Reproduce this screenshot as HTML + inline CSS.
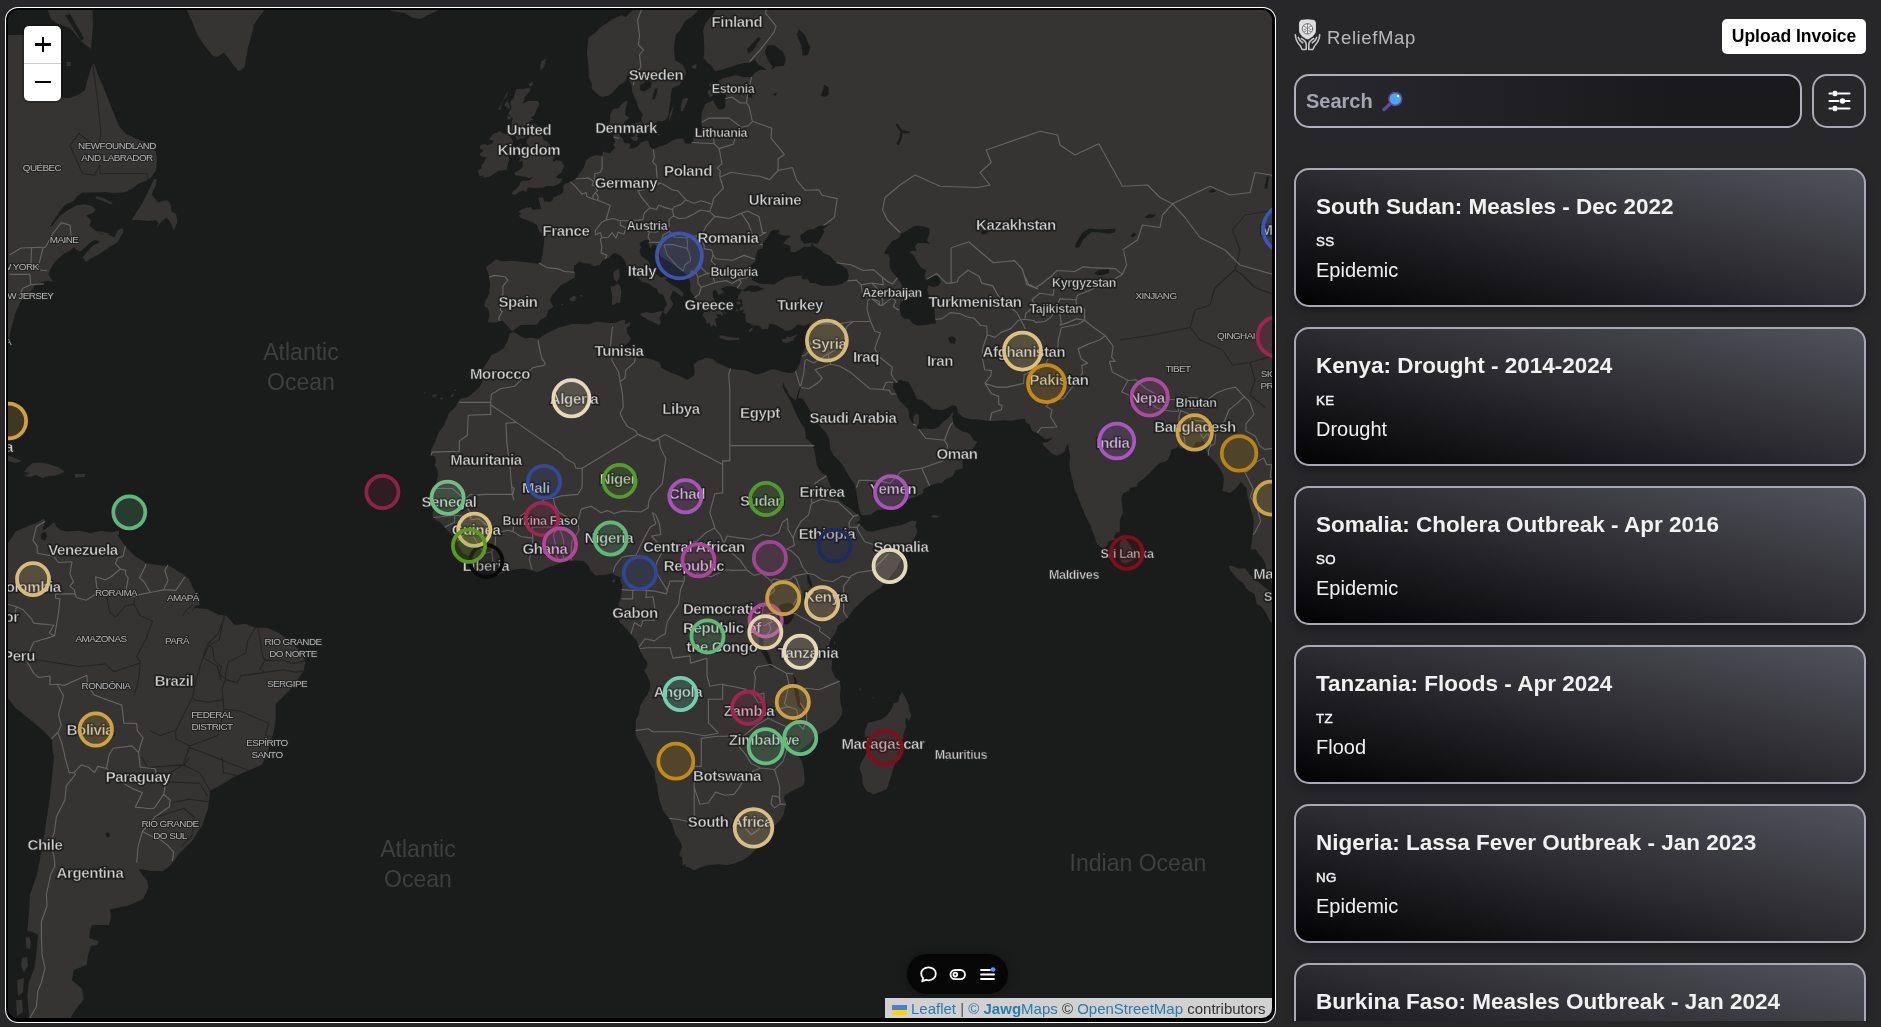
<!DOCTYPE html>
<html><head><meta charset="utf-8"><title>ReliefMap</title>
<style>
*{box-sizing:border-box}
html,body{margin:0;padding:0}
body{width:1881px;height:1027px;overflow:hidden;background:#27272a;font-family:"Liberation Sans",sans-serif;position:relative}
#frame{position:absolute;left:4.8px;top:6.8px;width:1271.4px;height:1016.4px;border-radius:13px;background:#fff}
#frame2{position:absolute;left:1.3px;top:1.3px;right:1.3px;bottom:1.3px;border-radius:12px;background:#000}
#map{position:absolute;left:8px;top:10px;width:1264px;height:1008px;border-radius:10px;overflow:hidden;background:#1a1c1c;will-change:transform}
#map svg.base{position:absolute;left:-8px;top:-10px;width:1881px;height:1027px}
.lbl{font-family:"Liberation Sans",sans-serif;font-weight:bold;fill:#cfcfcf;stroke:#1d1d1d;stroke-width:3px;paint-order:stroke;stroke-linejoin:round;text-anchor:middle}
.lbs{font-family:"Liberation Sans",sans-serif;font-weight:normal;fill:#b4b4b4;stroke:#222;stroke-width:2.2px;paint-order:stroke;stroke-linejoin:round;text-anchor:middle}
.lbt{font-family:"Liberation Sans",sans-serif;font-weight:bold;fill:none;stroke:#2b2b2a;stroke-width:.45px;text-anchor:middle}
.oc{font-family:"Liberation Sans",sans-serif;fill:#3e3f3f;text-anchor:middle}
#zoom{position:absolute;left:16px;top:16px;width:37px;height:75px;background:#fff;border-radius:5px;box-shadow:0 0 0 2px rgba(0,0,0,.2)}
#zoom i{position:absolute;background:#000;display:block}
#attr{position:absolute;left:877px;top:987.5px;width:387px;height:21px;background:rgba(255,255,255,.8);font-size:15px;line-height:21px;color:#333;white-space:nowrap;padding-left:7px}
#attr span.a{color:#2b7bab}
#attr .flag{display:inline-block;width:15px;height:10px;margin-right:4px;background:linear-gradient(#4c7be1 50%,#ffd500 50%);vertical-align:-1px}
#pill{position:absolute;left:899px;top:944px;width:101px;height:40px;border-radius:20px;background:#060606;box-shadow:0 0 10px rgba(0,0,0,.35)}
#side{position:absolute;left:1280px;top:0;width:601px;height:1021px;overflow:hidden;will-change:transform}
.card{position:absolute;left:14px;width:572px;height:139px;border:2px solid #a9a9b4;border-radius:15px;background:linear-gradient(to bottom left,#52525b 0%,#2b2b30 50%,#020203 100%);color:#f1f1f1;box-shadow:0 5px 8px rgba(0,0,0,.25)}
.card b{position:absolute;left:20px;top:21.8px;font-size:22.5px;line-height:30px;white-space:nowrap}
.card u{position:absolute;left:20px;top:63px;font-size:13.3px;line-height:18px;font-weight:normal;-webkit-text-stroke:.45px #f1f1f1;text-decoration:none;letter-spacing:.3px}
.card s{position:absolute;left:20px;top:86.9px;font-size:20px;line-height:26px;text-decoration:none}
#logo{position:absolute;left:47px;top:24.6px;font-size:18.5px;line-height:26px;color:#b9b9b9;letter-spacing:.62px}
#upl{position:absolute;left:442px;top:19px;width:144px;height:35px;border-radius:5px;background:#fff;color:#000;font-weight:bold;font-size:17.5px;line-height:34px;text-align:center}
#search{position:absolute;left:14px;top:74px;width:508px;height:54px;border:2px solid #b1b1bd;border-radius:15px;background:linear-gradient(to right,#29292d,#1a1a1d 75%)}
#search span{position:absolute;left:10px;top:12px;font-size:20px;line-height:26px;font-weight:bold;color:#a4a4b3}
#filt{position:absolute;left:532px;top:74px;width:54px;height:54px;border:2px solid #a9a9b4;border-radius:15px;background:#27272a}
</style></head>
<body>
<div id="frame"><div id="frame2"></div></div>
<div id="map">
<svg class="base" viewBox="0 0 1881 1027">
<rect width="1881" height="1027" fill="#1a1c1c"/>
<path id="landp" d="M510.0 333.0 L514.3 332.2 L524.3 338.3 L531.4 337.4 L537.8 339.1 L547.7 333.0 L558.4 327.8 L573.3 323.8 L588.3 324.2 L597.5 321.5 L607.5 322.9 L615.3 322.9 L622.4 319.8 L625.2 320.6 L625.2 324.2 L630.6 322.0 L629.5 326.0 L626.7 327.8 L627.4 333.0 L630.9 338.3 L628.8 342.6 L623.8 346.1 L623.8 349.5 L629.5 352.1 L631.6 355.5 L639.5 358.4 L645.9 358.0 L653.0 359.7 L659.4 362.2 L661.5 368.1 L670.0 372.3 L678.6 375.6 L687.1 379.7 L694.2 375.6 L694.9 370.6 L693.5 364.8 L698.5 360.6 L706.3 357.8 L712.7 358.9 L717.0 363.1 L722.7 365.2 L731.2 368.9 L745.4 370.6 L756.8 374.8 L764.6 372.3 L772.4 368.9 L781.7 371.4 L783.5 382.6 L782.4 386.3 L784.5 391.2 L788.1 396.8 L792.4 404.9 L795.9 413.6 L800.2 421.5 L804.4 427.8 L805.2 430.9 L805.9 437.9 L812.3 444.0 L815.1 453.2 L816.5 463.8 L818.0 467.6 L821.5 472.8 L826.5 475.8 L830.8 487.0 L832.9 493.7 L835.7 497.4 L843.6 504.0 L850.7 509.1 L855.6 512.8 L859.9 516.4 L859.9 520.8 L854.9 523.3 L858.8 523.3 L861.3 525.8 L867.0 531.3 L872.0 531.6 L882.7 529.1 L893.3 526.6 L901.9 525.1 L911.1 520.8 L916.7 521.3 L915.4 525.8 L917.5 531.3 L914.0 538.9 L909.7 545.3 L906.8 548.9 L900.4 561.1 L896.9 568.3 L889.1 578.2 L880.5 587.5 L874.1 591.8 L868.4 595.3 L860.6 602.4 L854.2 608.8 L847.8 617.4 L842.8 622.4 L837.9 625.2 L837.2 628.8 L834.3 634.8 L830.8 639.5 L827.9 648.0 L831.5 654.5 L832.2 663.1 L831.5 669.5 L835.0 677.5 L839.6 681.1 L840.7 688.3 L840.0 696.3 L840.7 703.6 L842.5 710.2 L841.4 715.4 L835.7 723.5 L827.9 729.4 L815.1 735.4 L810.1 742.5 L800.2 749.7 L798.0 755.0 L801.6 761.1 L803.7 768.0 L804.8 781.1 L803.0 785.8 L791.6 791.3 L785.2 795.2 L783.8 797.6 L786.0 804.7 L783.8 813.5 L780.3 820.0 L774.6 825.7 L772.4 829.0 L768.9 836.4 L761.8 843.1 L754.7 850.6 L750.4 854.8 L743.3 859.9 L734.0 863.4 L728.4 865.1 L718.4 864.2 L709.2 865.1 L700.6 867.2 L694.2 870.5 L688.5 867.2 L685.7 866.8 L685.3 864.2 L683.4 864.2 L683.6 866.4 L682.1 864.2 L682.8 862.5 L682.1 858.2 L679.3 854.8 L680.0 852.3 L682.1 847.2 L680.7 842.2 L675.0 833.9 L672.2 824.1 L669.3 818.4 L663.6 811.9 L660.1 802.3 L658.0 793.6 L657.2 785.8 L654.8 778.0 L655.1 771.8 L650.8 764.9 L645.9 755.8 L641.6 745.2 L635.9 736.2 L635.6 730.9 L635.9 719.8 L638.4 715.4 L640.2 705.8 L644.4 698.5 L648.0 694.1 L650.1 686.9 L650.1 682.5 L646.6 674.6 L644.4 670.3 L646.6 667.4 L647.3 662.4 L643.7 657.3 L639.5 649.5 L638.8 645.9 L636.3 640.2 L630.2 633.8 L627.7 630.2 L620.3 623.1 L617.4 617.4 L613.9 611.0 L618.1 608.1 L618.8 603.2 L620.3 598.9 L621.7 592.5 L622.4 585.4 L620.3 580.4 L621.0 577.5 L615.3 575.4 L612.4 573.3 L605.3 574.7 L601.8 574.7 L595.4 575.4 L591.1 571.1 L587.6 564.7 L583.3 561.1 L576.2 560.4 L569.1 560.8 L560.5 562.5 L557.0 564.7 L550.6 566.5 L544.9 569.0 L537.1 572.2 L530.0 569.7 L523.6 568.6 L516.4 569.3 L508.6 570.8 L502.2 573.3 L497.2 574.9 L493.0 573.3 L488.0 570.4 L481.6 566.1 L475.2 561.1 L470.2 556.8 L463.1 553.2 L459.6 547.5 L457.8 545.3 L458.1 541.7 L454.6 538.1 L451.7 534.5 L447.5 530.2 L444.6 527.3 L441.1 522.9 L436.1 520.0 L432.9 517.1 L432.5 512.8 L434.0 509.5 L431.8 504.7 L427.6 500.2 L430.4 498.1 L434.7 490.7 L436.1 483.3 L438.2 475.1 L436.8 468.3 L434.7 465.3 L436.1 460.8 L434.7 456.2 L430.8 454.7 L431.1 450.2 L435.4 441.0 L438.2 433.2 L443.9 425.4 L446.8 418.4 L448.9 412.8 L455.3 407.3 L458.1 401.7 L460.3 398.9 L466.7 397.6 L471.6 394.4 L479.5 387.1 L483.7 378.9 L481.6 376.4 L482.3 369.8 L486.6 363.1 L491.6 355.0 L498.0 352.1 L503.6 348.2 L507.2 341.7 L509.0 336.5Z M902.2 692.0 L905.4 697.8 L907.9 702.9 L909.3 709.5 L911.1 716.1 L909.0 720.9 L906.5 717.2 L905.1 721.3 L906.1 727.2 L903.3 733.9 L903.3 737.7 L899.7 748.2 L896.2 760.3 L892.6 771.0 L889.8 780.3 L886.9 788.9 L882.0 791.3 L873.4 794.4 L867.0 791.3 L862.8 785.0 L862.4 776.8 L859.6 768.7 L860.6 763.4 L864.2 757.3 L867.7 751.2 L868.1 743.7 L865.2 736.5 L864.5 731.7 L868.1 722.8 L874.1 721.3 L881.2 719.4 L886.9 715.4 L890.5 711.0 L892.6 706.6 L893.3 702.9 L898.3 702.2 L899.4 696.3Z M1122.3 535.8 L1120.5 537.4 L1121.6 540.3 L1120.2 542.1 L1119.5 548.9 L1119.8 556.8 L1121.2 561.8 L1124.8 563.8 L1128.7 562.5 L1133.0 559.7 L1134.3 556.1 L1133.3 551.1 L1130.1 545.3 L1127.3 541.0 L1124.4 537.4Z M931.0 516.0 L933.9 514.9 L938.1 515.7 L939.6 516.4 L936.0 517.9 L932.4 517.5Z M783.5 382.6 L784.5 386.3 L787.4 390.4 L788.4 394.0 L790.9 396.8 L795.6 400.6 L797.0 396.8 L798.4 391.2 L800.5 385.9 L800.5 387.9 L799.1 393.6 L798.0 398.1 L802.3 398.5 L805.9 403.7 L811.2 412.4 L816.9 421.9 L822.6 429.3 L826.5 433.2 L829.3 439.4 L830.4 449.4 L833.6 455.5 L838.2 459.7 L844.3 467.6 L848.5 475.8 L854.6 484.0 L856.4 492.2 L857.4 499.6 L859.6 510.6 L861.3 515.3 L865.6 515.3 L872.0 514.2 L877.0 510.2 L884.8 509.5 L894.8 505.4 L901.2 501.4 L909.0 498.8 L916.1 496.6 L923.2 493.3 L923.6 488.9 L929.6 485.9 L936.7 483.3 L941.7 483.3 L945.2 479.6 L952.7 476.2 L955.2 470.6 L963.0 468.3 L962.3 463.1 L963.4 457.8 L968.0 457.0 L971.2 450.9 L975.1 445.6 L977.2 441.7 L973.7 440.2 L970.8 435.5 L968.0 432.8 L963.0 431.7 L955.6 427.0 L953.1 422.3 L952.4 416.8 L953.4 411.6 L950.9 414.4 L949.9 416.4 L945.2 420.3 L941.0 423.9 L938.8 427.0 L933.2 429.3 L926.0 428.6 L918.9 429.3 L916.8 427.4 L918.6 424.3 L918.9 419.9 L918.9 415.2 L916.4 413.2 L914.0 416.0 L913.2 419.9 L913.6 424.3 L911.5 421.5 L909.0 417.6 L909.0 412.0 L907.2 408.1 L905.1 406.5 L901.9 402.5 L899.0 400.1 L896.9 395.2 L894.0 389.5 L892.6 387.1 L894.0 383.0 L896.9 382.6 L899.7 379.7 L904.0 381.0 L908.6 381.8 L911.8 387.9 L913.6 391.2 L916.8 398.9 L922.1 400.1 L926.0 403.3 L932.4 408.9 L938.8 409.7 L942.4 410.1 L947.4 408.1 L952.4 405.3 L956.6 406.5 L958.0 412.8 L963.0 417.2 L970.8 419.2 L975.8 419.2 L982.9 419.9 L990.0 421.1 L995.0 421.1 L1003.6 420.3 L1011.4 420.7 L1018.5 419.5 L1024.9 418.4 L1026.3 423.1 L1029.9 424.6 L1032.0 430.9 L1037.0 432.8 L1040.5 435.5 L1045.2 439.3 L1051.2 438.3 L1052.6 438.3 L1048.4 442.1 L1043.0 442.5 L1042.3 444.0 L1046.9 448.6 L1052.3 454.0 L1056.9 455.5 L1061.9 453.6 L1065.1 450.9 L1065.8 447.1 L1067.9 443.3 L1068.6 447.9 L1069.3 452.4 L1070.4 457.8 L1069.3 463.8 L1070.0 469.1 L1071.5 475.8 L1073.2 483.3 L1075.0 490.7 L1077.2 495.1 L1078.9 499.6 L1081.8 506.9 L1084.3 513.5 L1087.5 520.0 L1090.7 525.5 L1092.4 530.9 L1094.2 534.9 L1095.6 540.3 L1096.7 542.5 L1099.2 546.1 L1103.5 548.4 L1107.7 544.6 L1108.1 541.7 L1113.1 539.9 L1115.9 539.6 L1113.4 537.4 L1116.3 532.4 L1119.8 532.0 L1119.8 525.8 L1119.8 520.4 L1123.0 512.0 L1122.0 505.4 L1121.2 498.1 L1123.4 492.9 L1129.1 490.7 L1130.1 488.1 L1137.2 486.3 L1137.2 483.3 L1144.4 478.1 L1150.0 472.8 L1155.7 466.5 L1160.0 463.1 L1166.4 461.2 L1168.9 458.1 L1170.7 453.2 L1171.4 449.4 L1176.4 448.2 L1178.5 445.6 L1179.9 448.6 L1184.9 448.2 L1189.2 447.5 L1193.4 446.7 L1196.3 442.5 L1200.5 441.7 L1202.7 440.2 L1205.2 443.3 L1206.2 450.2 L1208.4 454.7 L1211.2 458.5 L1213.0 460.0 L1217.6 465.3 L1220.4 469.8 L1223.3 475.1 L1224.0 481.1 L1222.2 490.7 L1225.4 491.8 L1229.7 492.9 L1234.0 490.0 L1236.8 487.0 L1241.1 481.8 L1243.9 485.5 L1246.4 487.8 L1247.5 495.9 L1249.6 505.4 L1252.4 514.2 L1253.9 522.2 L1253.2 530.2 L1252.8 534.5 L1251.7 541.7 L1250.7 547.5 L1251.7 550.0 L1255.3 548.9 L1258.8 553.9 L1263.1 559.0 L1265.6 564.7 L1266.0 570.4 L1268.1 576.8 L1272.4 584.7 L1275.2 588.2 L1284.4 591.8 L1284.4 -24.9 L634.5 -24.9 L633.8 10.4 L629.5 12.8 L626.0 17.6 L621.7 15.2 L613.9 18.4 L606.8 23.1 L601.8 26.2 L595.4 32.4 L588.3 37.8 L587.6 46.1 L586.8 53.5 L588.3 63.7 L589.0 77.9 L591.8 84.1 L591.8 88.9 L594.7 91.6 L599.3 95.7 L602.1 97.0 L608.9 95.4 L614.2 91.0 L618.8 85.5 L622.4 83.4 L626.3 80.0 L627.4 73.7 L628.4 80.0 L631.3 84.1 L632.4 92.3 L636.3 101.1 L638.8 109.0 L643.0 114.8 L640.9 119.3 L642.3 122.5 L644.1 128.2 L643.4 130.7 L645.9 131.2 L650.1 130.5 L654.0 128.9 L653.3 124.4 L657.6 121.3 L662.9 121.3 L666.5 119.3 L668.6 114.2 L669.3 107.0 L670.8 99.7 L670.8 94.4 L672.2 88.2 L679.6 84.8 L684.3 78.6 L686.4 72.3 L682.8 65.1 L675.0 60.1 L674.0 50.6 L674.3 43.8 L675.7 34.7 L679.6 30.9 L685.3 20.7 L691.4 16.8 L697.1 12.0 L701.3 3.8 L701.3 -24.9 L719.8 -24.9 L718.4 3.8 L714.8 12.0 L705.6 23.1 L702.8 30.9 L703.8 36.3 L704.2 46.1 L704.2 53.5 L703.5 57.9 L707.7 63.0 L710.6 65.1 L715.2 71.6 L722.7 69.4 L729.4 67.3 L736.2 65.1 L743.3 63.0 L749.0 63.0 L754.7 59.4 L757.5 63.7 L763.2 67.3 L766.8 70.1 L759.6 70.1 L754.7 73.0 L751.1 77.2 L744.0 77.2 L735.5 75.1 L728.0 77.2 L722.7 78.2 L718.8 80.7 L719.1 86.9 L720.9 92.3 L726.2 92.3 L725.5 99.1 L725.2 107.0 L722.7 109.6 L718.4 109.6 L713.1 100.4 L705.6 103.7 L701.7 112.9 L701.3 120.6 L702.0 127.0 L701.3 132.0 L697.8 136.3 L693.5 136.3 L693.5 140.0 L690.7 143.7 L685.0 143.4 L683.2 138.4 L676.8 138.8 L671.8 140.7 L667.2 144.3 L658.7 146.8 L653.3 149.2 L649.8 146.8 L648.7 141.3 L645.9 140.7 L640.9 142.5 L638.0 146.2 L633.4 148.6 L629.2 148.6 L630.6 143.7 L624.5 143.1 L622.4 138.2 L619.6 135.7 L619.9 129.5 L623.1 125.1 L624.9 121.3 L629.5 118.1 L625.2 114.8 L625.2 110.3 L627.0 104.4 L627.4 100.4 L622.8 102.4 L618.8 108.3 L613.2 109.0 L610.3 114.2 L609.6 123.2 L609.6 128.9 L613.2 130.7 L613.5 137.0 L615.3 142.5 L613.2 144.3 L615.6 148.0 L613.2 149.5 L610.0 153.4 L603.2 151.6 L602.1 155.8 L596.1 154.9 L590.4 157.0 L585.8 160.5 L584.0 167.0 L581.2 171.6 L578.3 175.1 L576.9 178.5 L572.6 180.2 L569.1 182.5 L565.2 183.6 L563.4 185.8 L563.4 192.0 L559.8 194.8 L553.4 197.5 L552.7 200.3 L549.9 201.9 L544.2 201.4 L543.1 197.5 L538.1 197.5 L540.6 206.8 L541.3 208.9 L537.8 208.9 L532.8 210.0 L530.7 206.8 L523.6 208.4 L518.2 211.6 L521.4 213.8 L518.6 215.4 L521.1 218.0 L530.0 221.2 L534.2 223.3 L537.1 225.4 L539.2 231.6 L543.8 235.2 L544.2 241.3 L543.1 250.4 L541.0 261.8 L537.8 263.7 L530.7 262.8 L525.0 262.3 L511.5 260.8 L502.2 261.3 L495.8 259.3 L492.3 262.8 L485.9 267.2 L488.7 274.4 L490.1 284.4 L489.1 293.8 L485.2 301.2 L484.4 306.4 L487.3 308.0 L488.7 309.4 L489.4 313.9 L488.0 322.3 L495.8 322.4 L502.6 320.6 L507.2 326.0 L512.2 331.3 L514.0 330.0 L520.7 325.1 L530.7 324.7 L536.4 324.9 L540.6 319.8 L546.3 317.1 L548.4 310.3 L553.4 306.7 L549.9 300.2 L552.0 295.6 L558.0 288.6 L560.9 284.9 L567.6 282.0 L574.8 277.3 L575.5 273.4 L573.7 270.5 L574.0 265.7 L579.7 261.8 L584.7 263.3 L590.0 263.7 L594.3 266.2 L599.6 264.7 L603.6 259.8 L608.9 257.9 L612.4 253.9 L615.3 252.9 L621.7 256.4 L625.2 261.3 L626.7 267.2 L630.9 272.5 L635.9 275.4 L641.6 281.6 L648.7 283.5 L653.3 287.2 L656.9 289.1 L658.7 293.3 L662.9 294.7 L665.8 301.2 L667.2 304.8 L664.7 307.6 L663.3 312.6 L666.1 314.2 L669.7 309.8 L673.6 304.4 L670.0 297.9 L672.2 291.4 L674.3 291.0 L680.0 295.2 L682.5 297.0 L683.6 293.8 L679.6 289.1 L672.2 284.9 L665.4 280.1 L667.2 277.3 L660.8 277.3 L656.5 274.4 L653.0 272.0 L650.5 265.7 L648.0 260.8 L641.6 256.4 L639.5 250.9 L640.9 247.4 L639.5 242.9 L645.2 239.8 L649.8 240.3 L648.4 243.9 L650.5 248.4 L653.7 243.9 L658.0 246.9 L660.1 255.9 L669.0 261.8 L676.4 266.7 L680.7 270.1 L687.8 275.4 L690.3 283.0 L690.0 291.0 L694.2 296.6 L695.6 299.8 L699.6 304.8 L702.0 310.3 L706.3 310.8 L714.8 313.5 L709.9 311.7 L704.2 312.1 L702.4 315.3 L706.0 319.8 L706.3 324.0 L709.2 322.4 L711.3 327.3 L713.4 324.7 L717.0 327.3 L714.8 318.9 L718.4 318.0 L715.6 314.4 L720.5 314.2 L723.0 316.6 L722.7 311.7 L717.0 307.1 L714.1 305.7 L715.6 301.6 L712.7 296.1 L712.7 291.4 L715.2 289.6 L718.0 293.3 L718.4 295.6 L721.2 293.3 L722.7 295.6 L722.0 291.9 L725.2 293.8 L720.9 288.6 L725.5 286.8 L730.5 286.3 L736.2 287.2 L737.2 288.6 L742.6 289.6 L738.3 294.7 L741.5 291.9 L739.7 294.2 L738.0 295.6 L737.6 299.8 L742.6 299.8 L741.9 301.6 L742.9 306.2 L739.7 307.6 L739.0 311.2 L744.7 309.4 L742.6 312.6 L745.8 314.8 L745.4 319.3 L746.8 322.4 L753.2 324.2 L749.0 325.1 L753.2 325.5 L758.9 325.5 L762.5 329.5 L768.2 329.1 L769.6 323.8 L775.3 324.7 L779.6 326.9 L785.2 331.1 L791.6 330.0 L798.0 324.2 L804.4 326.0 L809.4 323.3 L809.1 327.8 L806.6 331.3 L806.2 335.7 L807.3 340.9 L806.6 344.8 L804.4 349.5 L801.6 356.3 L800.9 358.9 L799.1 365.2 L795.9 370.6 L792.4 373.1 L787.4 372.7 L781.7 371.4Z M511.5 193.7 L515.0 194.7 L522.5 190.3 L526.0 191.8 L527.8 187.5 L534.6 188.1 L542.8 187.8 L546.3 186.1 L553.8 186.1 L558.9 184.0 L561.6 181.6 L562.3 178.7 L558.4 178.5 L555.6 177.3 L558.8 174.5 L561.2 172.8 L564.4 166.0 L561.2 160.8 L555.6 160.3 L553.4 162.3 L552.7 159.9 L554.5 157.6 L552.7 152.8 L549.9 151.6 L551.4 146.5 L547.7 141.9 L543.8 140.0 L542.0 135.7 L540.6 128.2 L537.8 126.1 L534.2 123.2 L528.5 123.4 L527.8 122.5 L533.5 119.6 L530.7 117.4 L534.2 115.5 L537.4 108.3 L539.3 103.7 L537.8 101.1 L528.5 100.8 L522.1 103.7 L525.0 98.8 L523.6 98.4 L526.0 95.4 L530.0 91.0 L530.5 88.4 L527.8 88.0 L521.4 89.6 L516.4 88.7 L514.3 95.0 L513.6 98.4 L510.8 101.1 L510.4 105.0 L511.5 106.6 L510.4 110.3 L507.9 113.8 L512.9 118.1 L511.8 121.9 L510.9 132.0 L512.9 130.7 L514.3 125.1 L517.2 123.8 L518.9 130.1 L517.2 133.2 L515.4 137.0 L517.5 140.3 L520.7 138.2 L523.2 138.4 L526.8 136.1 L530.0 136.3 L526.8 140.0 L526.2 141.9 L528.9 146.8 L531.7 146.8 L530.3 150.4 L530.3 154.6 L530.0 156.4 L525.0 156.0 L519.6 154.9 L518.9 157.0 L521.1 158.7 L518.2 162.3 L522.8 161.1 L522.8 167.0 L518.6 170.5 L514.3 173.0 L515.4 175.6 L518.6 175.6 L521.8 176.8 L523.9 176.2 L529.6 178.3 L533.2 176.2 L530.7 179.6 L527.1 180.8 L522.5 180.8 L519.8 183.0 L519.6 185.3 L516.8 188.1 L512.9 191.8Z M499.4 131.0 L502.6 133.2 L504.4 133.9 L508.3 133.0 L510.8 137.6 L512.5 140.0 L513.2 143.1 L510.0 145.5 L508.6 148.0 L506.8 148.0 L507.6 151.3 L508.6 155.8 L509.3 160.3 L508.3 162.3 L506.8 169.6 L502.7 170.2 L498.3 170.8 L496.2 172.4 L493.3 173.9 L491.6 175.6 L488.7 176.8 L482.3 177.9 L484.4 175.3 L479.8 176.2 L478.4 172.8 L477.7 170.5 L481.6 168.4 L481.6 166.7 L481.4 165.1 L483.4 163.7 L484.9 160.3 L486.1 158.1 L488.0 157.6 L483.7 157.0 L479.5 155.2 L480.2 153.4 L481.6 152.5 L483.7 150.4 L479.8 148.3 L480.5 144.9 L485.5 144.0 L486.6 145.3 L491.2 144.3 L493.0 142.1 L494.0 140.3 L489.8 140.3 L489.4 138.8 L491.9 136.3 L493.1 133.9 L495.3 133.0 L497.7 132.4Z M640.5 313.5 L646.9 311.9 L651.6 313.2 L660.4 311.2 L663.1 311.0 L659.4 318.0 L660.8 322.0 L659.4 325.3 L653.3 322.0 L648.4 319.9 L645.2 318.0 L640.5 315.3Z M617.4 283.5 L620.3 286.3 L621.3 291.4 L621.0 296.1 L619.9 303.3 L616.7 302.5 L613.5 305.5 L611.7 304.4 L612.4 296.1 L611.0 290.0 L610.3 286.3 L613.9 286.6Z M618.8 266.7 L619.2 269.6 L619.9 275.4 L618.1 280.1 L617.1 282.2 L614.6 279.7 L613.5 277.3 L613.2 272.5 L615.6 270.1 L618.1 269.6Z M719.5 335.2 L722.7 335.2 L726.2 336.5 L730.8 337.0 L735.1 337.8 L739.0 337.6 L739.0 340.0 L735.1 340.0 L728.0 340.6 L719.8 338.0Z M781.7 339.6 L786.3 338.4 L786.3 336.5 L790.2 337.0 L793.8 335.7 L798.0 333.9 L793.4 339.1 L794.3 340.4 L791.3 341.1 L786.7 343.0 L782.4 342.2Z M568.7 298.9 L574.0 295.6 L576.5 297.5 L574.8 301.2 L571.6 301.2 L569.8 299.8Z M579.0 294.7 L582.6 295.6 L582.2 296.7 L579.4 295.8Z M560.9 304.8 L563.0 303.5 L563.4 304.8 L561.6 305.7Z M630.9 127.2 L635.2 123.8 L639.5 121.6 L641.6 122.8 L641.6 127.2 L638.8 130.1 L640.5 132.0 L637.3 135.7 L635.2 135.7 L632.0 133.2 L631.1 131.6Z M621.7 129.5 L623.8 128.5 L628.1 128.2 L628.8 132.0 L627.4 135.1 L624.9 134.5 L622.4 132.4Z M630.2 137.6 L636.6 136.1 L638.4 138.2 L636.6 141.0 L633.1 140.4Z M680.7 107.0 L682.8 99.1 L687.1 97.7 L688.5 98.4 L685.7 105.0 L682.8 110.9 L681.1 111.3Z M668.6 120.6 L669.7 114.2 L673.6 105.7 L672.5 112.2 L669.3 120.6Z M707.4 93.0 L708.4 90.3 L714.8 88.5 L717.7 90.6 L714.8 93.7 L709.9 97.7 L709.2 94.4Z M708.8 84.4 L712.7 82.3 L715.9 84.8 L713.4 87.6 L710.6 86.5Z M656.5 134.5 L656.9 132.0 L659.7 133.9 L659.4 135.7Z M691.4 66.6 L696.4 63.7 L696.4 68.7 L693.5 68.7Z M714.5 305.7 L718.0 304.4 L719.8 306.7 L723.7 307.6 L724.4 311.7 L726.9 313.5 L725.2 313.9 L722.7 310.3 L719.8 309.4 L717.0 307.1Z M749.0 330.0 L752.9 327.3 L751.8 330.8 L749.7 332.2Z M735.8 302.5 L739.4 300.9 L741.2 303.9 L738.0 304.6Z M736.2 308.5 L738.0 308.9 L737.6 311.7 L736.2 311.2Z M540.6 70.8 L544.2 66.6 L546.3 57.9 L541.3 61.5 L540.3 65.9Z M528.5 84.1 L532.8 82.1 L532.8 85.5 L529.2 86.2Z M498.0 109.0 L502.2 102.4 L507.9 90.3 L507.2 95.7 L502.9 101.1 L500.1 110.3Z M504.4 105.0 L507.2 101.1 L510.0 106.3 L509.3 109.6Z M507.2 115.7 L511.5 116.8 L510.8 119.3 L506.8 119.3Z M518.2 146.8 L520.7 143.1 L521.1 145.5Z M1229.0 566.1 L1231.8 565.8 L1238.2 568.6 L1245.3 568.6 L1248.9 573.3 L1253.9 579.0 L1261.7 584.7 L1266.0 588.2 L1270.2 591.1 L1275.9 593.2 L1284.4 598.9 L1284.4 630.9 L1274.5 625.9 L1270.2 621.6 L1266.0 613.1 L1261.7 606.7 L1256.7 603.9 L1254.6 593.9 L1248.9 590.4 L1246.0 588.2 L1243.2 583.2 L1237.5 579.0 L1234.0 574.7 L1230.4 570.4Z M830.8 647.0 L832.2 648.0 L833.2 651.6 L831.5 650.9Z M834.3 640.9 L835.4 642.3 L834.7 644.8 L834.0 643.0Z M613.2 579.3 L615.6 580.0 L613.9 582.9 L612.1 581.8Z M944.9 758.0 L948.1 758.4 L948.8 760.7 L946.0 761.5Z M960.2 751.2 L962.7 752.0 L962.3 754.6 L959.8 754.6Z M431.8 395.6 L436.8 394.0 L435.0 398.1Z M439.6 398.1 L442.5 397.6 L441.8 400.5Z M450.3 397.6 L453.2 392.8 L453.5 396.0Z M453.9 390.4 L456.4 388.7 L456.0 391.2Z M424.0 392.4 L425.8 392.0 L425.1 394.4Z M859.6 687.6 L861.0 689.1 L860.6 691.2 L859.6 690.5Z M872.4 697.1 L873.8 697.8 L873.1 699.1Z M0.0 35.0 L40.0 35.0 L55.0 50.0 L57.0 70.0 L58.0 90.0 L62.0 98.0 L70.0 98.0 L78.0 95.0 L85.0 90.0 L88.0 78.0 L91.0 68.0 L94.0 63.0 L98.0 75.0 L105.0 91.0 L112.0 109.0 L119.0 126.0 L126.0 134.0 L137.0 139.0 L148.0 143.0 L156.0 152.0 L157.0 160.0 L156.2 169.7 L151.6 176.7 L146.9 180.2 L138.7 183.7 L130.5 189.5 L123.5 192.5 L114.2 193.1 L104.8 191.9 L95.5 192.5 L82.6 192.5 L76.8 196.6 L73.2 201.2 L65.1 204.7 L60.4 210.6 L55.7 217.6 L49.9 226.9 L52.2 225.8 L59.2 216.4 L67.4 210.6 L76.8 205.3 L84.9 204.2 L91.9 205.9 L95.5 209.4 L93.1 212.9 L86.1 215.3 L90.8 219.9 L89.6 225.8 L95.5 230.5 L100.1 234.0 L109.5 235.1 L114.2 237.5 L117.7 230.5 L122.3 228.1 L123.5 231.6 L118.8 239.8 L116.5 243.3 L111.8 245.6 L104.8 250.3 L97.8 255.0 L90.8 258.5 L86.1 262.0 L82.6 257.3 L87.3 251.5 L93.1 245.6 L100.1 242.1 L95.5 239.8 L90.8 242.1 L86.1 246.8 L80.3 251.5 L75.6 249.2 L74.4 246.8 L68.6 251.5 L63.9 253.8 L58.1 258.5 L53.4 264.3 L49.9 270.2 L48.7 274.9 L49.9 277.2 L53.4 281.9 L47.5 280.7 L41.7 281.9 L40.0 283.0 L35.0 284.8 L32.5 289.5 L26.0 296.0 L20.0 302.0 L15.0 314.5 L13.0 322.0 L11.0 329.5 L8.8 339.5 L6.0 350.0 L0.0 352.0Z M153.9 179.0 L148.0 191.9 L142.2 203.6 L135.2 214.1 L131.7 219.9 L139.9 219.9 L148.0 221.1 L156.2 219.9 L158.6 223.4 L156.2 228.1 L162.1 221.1 L166.7 217.6 L170.3 222.3 L173.8 230.5 L177.3 222.3 L176.1 214.1 L171.4 211.8 L170.3 203.6 L166.7 200.1 L158.6 202.4 L153.9 197.7 L151.6 194.2 L155.6 186.0 L156.8 179.0Z M95.5 196.3 L102.5 197.7 L113.0 203.0 L110.6 204.2 L101.3 200.6 L96.0 198.3Z M96.0 230.7 L100.1 233.4 L107.1 234.8 L110.6 234.0 L104.8 232.6 L100.1 231.4Z M44.0 0.0 L92.0 0.0 L93.0 26.0 L91.0 49.0 L82.0 42.0 L70.0 28.0 L58.0 24.0 L51.0 19.0Z M67.0 62.0 L71.0 62.0 L71.0 66.0 L67.0 66.0Z M186.0 0.0 L187.0 11.0 L192.0 20.7 L196.7 33.5 L204.7 46.0 L212.6 55.8 L218.0 57.0 L223.8 52.6 L230.0 60.6 L238.0 71.0 L241.0 70.0 L244.5 67.0 L247.7 49.4 L251.0 36.7 L254.0 24.0 L263.7 11.0 L264.0 0.0Z M390.0 0.0 L391.0 11.0 L404.0 12.8 L412.0 17.5 L420.0 19.0 L428.0 15.0 L437.5 10.8 L438.0 0.0Z M24.0 472.0 L27.0 468.0 L32.5 463.0 L41.0 462.5 L50.0 464.5 L58.0 467.0 L65.0 472.0 L60.0 474.0 L55.0 475.8 L48.0 476.0 L42.5 478.0 L36.0 475.0 L30.0 477.0 L24.0 476.0 L30.0 473.0Z M75.0 474.0 L85.0 474.0 L85.0 477.0 L75.0 477.5Z M0.0 455.0 L10.0 456.0 L22.0 461.0 L16.0 463.0 L8.0 461.0 L0.0 462.0Z M115.0 531.0 L119.0 531.0 L119.0 535.0 L115.0 535.5Z M0.0 545.0 L8.8 542.0 L15.8 531.5 L28.0 526.0 L38.6 522.0 L43.8 518.4 L45.5 521.0 L43.0 527.0 L43.0 530.7 L47.0 528.0 L50.0 526.0 L54.0 522.0 L56.0 526.0 L60.0 530.0 L66.6 531.5 L79.0 530.7 L91.0 533.0 L101.7 530.7 L112.0 532.4 L117.5 530.7 L116.0 534.0 L121.0 540.0 L126.0 547.0 L135.0 556.0 L145.5 563.0 L157.8 565.0 L170.0 566.6 L182.0 573.6 L189.0 579.0 L193.0 587.7 L198.0 598.0 L200.0 605.0 L195.0 606.0 L191.0 612.0 L184.5 616.0 L190.0 613.0 L195.0 608.0 L207.0 609.0 L218.0 614.5 L226.6 616.0 L235.0 625.0 L246.0 624.0 L255.5 627.7 L267.0 627.7 L279.0 633.0 L289.7 641.0 L300.0 651.0 L305.5 662.0 L303.8 670.6 L296.7 681.0 L289.7 690.0 L281.0 698.7 L275.7 704.0 L275.7 719.7 L274.0 730.0 L270.0 745.0 L263.4 761.8 L261.6 765.0 L250.0 770.0 L236.6 775.4 L226.0 782.0 L210.0 791.0 L209.0 800.0 L207.7 809.6 L202.4 825.0 L192.0 841.0 L178.8 854.0 L171.0 864.8 L163.0 871.0 L150.0 871.0 L139.0 868.7 L137.0 862.0 L140.0 872.0 L147.0 880.5 L148.5 888.0 L143.0 899.0 L128.8 905.5 L110.0 909.5 L111.0 917.0 L109.0 925.0 L92.0 925.0 L90.0 931.0 L89.0 938.0 L98.6 941.0 L97.0 945.0 L90.7 946.0 L88.0 955.0 L86.7 964.7 L73.6 970.0 L72.0 980.5 L81.5 988.0 L84.0 999.0 L76.0 1009.0 L71.0 1017.0 L71.0 1027.0 L29.0 1027.0 L29.0 1014.8 L27.3 996.6 L29.0 982.0 L34.6 967.5 L36.4 953.0 L38.0 934.7 L33.0 932.0 L27.3 931.0 L29.0 912.8 L30.0 894.6 L36.4 876.4 L39.4 862.0 L45.0 830.0 L50.0 796.0 L54.0 757.0 L52.5 750.0 L52.0 740.0 L42.5 730.0 L27.5 717.5 L15.0 707.5 L7.5 697.5 L0.0 693.0Z M25.5 938.0 L29.0 936.5 L31.0 942.0 L30.0 949.0 L26.5 948.0Z M22.0 958.0 L27.0 957.0 L28.0 966.0 L24.0 972.0 L21.0 966.0Z M17.0 980.0 L24.0 978.0 L23.0 992.0 L18.0 996.0Z M16.0 1000.0 L22.0 1000.0 L23.0 1012.0 L17.0 1016.0Z " fill="#353433"/>
<clipPath id="lc"><use href="#landp"/></clipPath>
<path d="M758.9 283.5 L762.5 283.9 L767.5 283.9 L774.6 284.4 L778.1 281.6 L785.2 277.7 L792.4 276.3 L802.0 275.4 L801.6 279.2 L808.0 279.2 L810.1 283.0 L814.4 283.0 L821.5 285.8 L827.9 285.8 L834.3 285.8 L841.4 283.9 L847.8 280.1 L848.9 274.9 L846.8 269.1 L843.6 266.7 L837.9 263.3 L834.3 260.8 L830.0 255.9 L823.6 252.9 L820.8 249.9 L817.2 247.9 L813.7 245.9 L812.3 243.4 L818.0 243.4 L821.5 236.8 L824.4 231.6 L822.9 229.5 L827.2 225.9 L831.5 223.8 L826.5 224.9 L818.7 225.9 L813.7 229.0 L807.3 230.1 L803.0 233.7 L800.2 234.7 L800.9 239.8 L804.4 243.9 L811.6 242.4 L811.2 246.4 L803.7 246.9 L800.9 248.9 L794.8 252.4 L790.2 251.4 L790.6 246.9 L788.1 244.9 L783.1 243.4 L786.7 239.3 L791.6 235.7 L786.7 235.7 L781.7 235.2 L778.1 233.7 L779.6 230.6 L773.9 230.1 L770.7 231.6 L766.8 238.3 L763.2 242.9 L762.8 248.4 L757.5 249.9 L755.7 255.4 L755.4 261.8 L751.1 264.7 L750.4 269.6 L747.9 271.5 L751.1 276.3 L752.5 280.6Z M741.9 291.0 L746.1 291.4 L749.7 290.5 L751.1 291.9 L757.5 291.6 L758.9 291.0 L764.6 288.4 L760.4 287.7 L758.2 285.8 L755.4 285.8 L751.8 285.2 L747.9 286.1 L745.4 288.6Z M889.8 266.7 L891.2 270.5 L895.5 275.8 L899.7 281.1 L901.9 285.3 L904.7 289.6 L910.4 291.4 L906.8 292.4 L903.6 295.2 L902.9 300.7 L900.4 302.5 L899.7 306.7 L899.7 309.8 L901.2 316.2 L904.0 318.4 L909.0 319.3 L912.5 323.3 L917.5 325.5 L926.4 325.1 L932.4 323.8 L936.0 323.3 L935.6 319.3 L934.9 318.0 L934.6 308.9 L934.6 304.4 L929.6 301.2 L932.4 298.9 L933.2 295.6 L928.9 295.2 L927.1 290.5 L928.2 285.3 L933.2 287.2 L938.1 285.8 L941.0 282.0 L938.1 276.3 L933.2 274.9 L928.9 278.7 L925.7 280.6 L924.6 275.4 L926.4 270.5 L921.8 268.1 L918.9 264.7 L916.1 260.3 L913.6 254.9 L909.3 251.9 L913.6 250.4 L916.8 251.4 L914.7 246.9 L917.5 242.9 L924.6 242.9 L929.6 243.9 L927.1 240.8 L929.6 232.6 L928.9 228.0 L923.2 226.4 L916.8 225.4 L911.8 227.5 L905.4 231.6 L901.9 233.2 L898.3 238.8 L892.6 240.8 L888.4 245.9 L884.8 250.9 L884.1 253.4 L888.4 254.4 L889.8 258.8 L889.4 262.8Z M980.8 232.6 L984.4 228.5 L988.6 229.5 L987.2 233.2 L982.9 234.7Z M1074.7 245.9 L1077.5 240.8 L1082.5 232.6 L1089.6 228.5 L1099.6 229.5 L1109.5 229.0 L1115.2 228.5 L1115.2 232.6 L1108.8 233.7 L1101.0 232.6 L1091.7 232.1 L1086.8 235.7 L1082.5 240.8 L1079.6 246.9 L1076.1 247.9Z M1093.9 273.0 L1099.6 270.1 L1108.8 269.1 L1108.8 273.0 L1101.0 275.4 L1096.0 274.4Z M777.4 608.1 L781.0 604.6 L788.1 602.8 L793.8 604.6 L795.2 608.8 L794.5 613.8 L791.6 620.9 L787.4 624.5 L782.4 623.8 L778.8 625.2 L777.4 619.5 L778.1 613.1Z M760.4 630.2 L763.2 638.0 L763.2 645.9 L768.2 653.0 L771.0 660.2 L773.5 668.1 L769.6 666.7 L765.3 658.1 L760.4 650.2 L758.9 641.6 L758.9 633.8Z M793.1 673.9 L796.3 679.6 L797.3 687.6 L799.5 695.6 L800.2 703.6 L802.7 708.8 L800.2 708.8 L797.3 705.1 L795.9 697.8 L794.1 689.1 L794.5 681.8Z M808.0 574.0 L809.8 577.5 L812.3 584.7 L811.6 588.2 L808.0 582.5 L806.9 576.8Z M771.7 70.1 L776.0 66.6 L783.8 65.9 L786.0 59.4 L783.1 52.0 L774.6 45.3 L767.5 45.3 L764.6 52.0 L768.2 60.8 L772.4 66.6Z M802.3 55.7 L808.0 55.0 L810.1 47.6 L805.2 35.5 L799.5 29.3 L796.6 34.0 L800.9 44.6 L802.3 50.6Z M640.2 90.3 L644.4 91.6 L650.8 87.6 L651.6 82.1 L646.6 78.6 L643.7 83.4 L640.2 84.8Z M652.3 99.7 L655.1 98.4 L657.2 91.6 L658.0 87.6 L655.1 88.9 L653.0 94.4Z M744.0 91.6 L748.3 97.0 L752.5 98.4 L750.4 88.9 L747.6 83.4 L744.0 84.8Z M1144.4 217.0 L1149.3 214.3 L1155.7 214.8 L1153.6 217.5 L1147.9 218.5Z M1130.1 236.2 L1133.7 232.6 L1136.5 234.7 L1133.0 237.3Z M1208.4 192.0 L1212.6 188.7 L1216.2 190.9 L1211.9 193.1Z M1264.5 188.7 L1266.7 176.2 L1268.8 177.3 L1267.4 188.7Z M820.8 95.7 L824.4 84.8 L828.6 87.6 L828.6 94.4 L825.1 97.0Z M896.2 144.3 L899.7 137.0 L900.4 132.0 L895.5 124.4 L897.6 123.8 L901.9 130.1 L909.7 131.4 L909.7 133.2 L902.6 133.2 L901.9 138.2 L899.0 145.5Z M748.3 53.5 L753.2 50.6 L757.5 43.1 L761.1 38.6 L758.2 37.0 L754.0 41.6 L750.4 46.1 L746.8 49.1Z M772.4 95.0 L776.7 92.3 L776.0 95.7Z M65.0 15.0 L70.0 14.0 L84.0 38.0 L81.5 41.0Z M42.0 533.0 L45.5 532.0 L47.0 536.0 L45.0 540.5 L41.0 539.0 L40.5 535.0Z M105.5 833.0 L109.0 832.5 L110.0 836.0 L107.0 838.0Z M948.0 338.0 L952.0 336.0 L956.0 339.0 L955.0 344.0 L950.0 343.0Z " fill="#1a1c1c"/>
<path clip-path="url(#lc)" d="M106.9 597.3 L109.6 612.2 L115.7 617.1 L125.4 605.7 L134.1 604.3 L134.6 598.2 M134.1 604.3 L140.3 615.7 L152.5 621.0 L145.5 640.3 L136.7 656.0 L140.3 663.0 L138.5 680.0 L135.0 692.8 M182.3 615.7 L186.7 609.6 L192.8 605.2 M224.4 615.7 L219.1 640.3 L208.6 645.5 L203.4 657.8 L217.4 666.5 L220.9 680.0 M35.1 659.5 L78.9 666.5 L98.2 664.8 L105.2 663.9 L114.0 671.8 L140.3 663.0 M8.8 658.7 L35.1 659.9 M224.9 616.3 L217.9 633.8 L207.3 644.3 L212.6 647.9 L214.3 660.1 L221.4 667.1 L219.6 674.2 L225.7 679.4 L222.2 688.2 L223.1 700.4 L224.0 709.2 M207.3 644.3 L202.1 660.1 L195.9 681.2 L192.4 696.9 L195.1 700.4 L209.1 702.2 L224.0 699.6 M255.5 627.7 L247.7 640.8 L245.9 653.1 L228.4 661.9 L225.7 672.4 L225.7 679.4 M258.2 628.6 L262.6 656.6 L265.2 660.1 L259.9 668.9 L265.2 672.4 L240.6 675.9 L237.1 682.9 L225.7 679.4 M265.2 660.1 L282.7 660.1 L293.2 663.6 L305.5 661.0 M265.2 672.4 L282.7 669.8 L296.7 672.4 L302.9 670.6 M224.0 709.2 L240.6 711.0 L259.9 719.7 L268.7 723.2 L265.2 735.5 L272.2 737.3 M192.4 696.9 L175.8 730.3 L175.8 739.0 L189.8 746.0 L217.9 735.5 L224.0 709.2 M189.8 746.0 L182.8 765.3 L170.5 772.3 M189.8 747.8 L209.1 754.8 L230.1 763.6 L247.7 770.0 L258.2 775.8 M175.8 730.3 L160.0 735.5 L149.5 730.3 M142.0 757.0 L147.2 767.5 L184.0 764.9 L199.8 772.8 L210.3 791.2 M168.2 782.0 L199.8 783.3 L207.7 796.4 M170.9 803.0 L189.3 799.1 L207.7 801.7 M155.1 817.5 L184.0 808.3 L194.5 817.5 L191.9 835.9 L181.4 846.4 M222.1 757.0 L223.4 772.8 L236.6 775.4 M184.0 764.9 L189.3 757.0 M1120.0 340.0 L1152.5 335.0 L1190.0 327.5 L1195.0 310.0 L1210.0 305.0 L1215.0 287.5 L1235.0 270.0 L1242.5 275.0 L1255.0 287.5 L1275.0 295.0 M1190.0 327.5 L1200.0 340.0 L1222.5 350.0 L1232.5 365.0 L1250.0 362.5 L1275.0 355.0 M1235.0 270.0 L1240.0 250.0 L1232.5 230.0 L1245.0 215.0 L1275.0 210.0 M1250.0 362.5 L1255.0 380.0 L1250.0 395.0 L1265.0 407.5 M92.9 64.9 L98.2 105.2 L100.8 133.2 L98.2 149.0 L78.9 133.2 L70.1 145.5 L82.4 173.6 L94.7 175.3 L99.9 164.8 L99.9 173.6 L147.3 173.6 L147.3 180.6" fill="none" stroke="#242423" stroke-width="1.1" stroke-linejoin="round"/><path d="M730.8 368.5 L728.7 373.9 L729.8 388.7 L729.8 445.6 M729.8 445.6 L774.6 445.6 L788.1 445.6 L794.5 445.6 L814.4 445.6 M729.8 445.6 L729.8 460.8 L722.7 460.8 L722.7 464.6 M722.7 464.6 L665.1 434.4 L658.7 437.9 M658.7 437.9 L653.0 441.0 L637.1 433.8 M722.7 464.6 L722.7 492.9 L714.8 493.7 L712.0 504.0 L709.9 512.8 L714.8 527.3 L714.6 528.0 M714.6 528.0 L706.3 532.4 L697.1 541.0 L687.1 543.2 L680.0 548.9 L670.0 551.1 L662.2 552.5 M662.2 552.5 L660.1 545.3 L651.6 536.0 L660.8 534.5 L659.4 523.7 L655.8 514.9 L652.3 512.4 M658.7 437.9 L660.8 448.6 L665.8 458.5 L663.6 474.3 L662.2 484.0 L651.6 495.1 L648.7 501.8 L648.0 507.6 M648.7 507.6 L640.9 512.0 L623.1 510.9 L613.9 513.5 L607.5 510.6 L601.1 512.8 L591.1 506.2 L581.2 509.1 L577.6 522.2 M582.2 467.6 L582.2 484.0 L581.9 487.8 L577.6 494.4 L561.2 495.9 L553.4 498.5 M577.6 522.2 L579.0 530.2 L571.9 541.7 L571.2 552.5 L571.2 560.4 M652.3 512.4 L655.8 523.7 L650.1 527.3 L643.7 538.9 L635.9 555.4 L626.7 556.1 L621.7 557.5 L615.3 565.4 L613.2 571.8 M662.2 552.5 L657.2 561.1 L654.4 570.4 L659.4 577.5 L667.2 590.4 M667.2 590.4 L666.5 593.9 L655.1 591.1 L646.6 590.4 L632.7 590.4 L621.7 589.6 M632.7 590.4 L632.7 598.9 L621.7 598.9 M646.6 590.4 L645.9 597.5 L653.0 596.8 L655.1 609.6 L650.8 616.0 L654.4 620.2 L643.0 620.2 L640.9 626.6 L634.5 622.4 L630.9 633.8 M684.3 581.1 L680.7 588.9 L678.6 603.9 L667.2 621.6 L665.1 633.8 L660.1 636.6 L654.4 640.9 L645.2 638.7 L638.8 647.3 M684.3 581.1 L684.3 575.4 L690.0 569.7 L700.6 574.7 L711.3 576.8 L718.4 573.3 L726.2 569.7 L731.9 570.4 L746.8 570.0 M667.2 590.4 L670.0 581.1 L684.3 581.1 M714.6 528.0 L720.5 535.2 L724.1 543.9 L731.2 552.5 L739.7 559.7 L746.8 570.0 M724.1 543.9 L726.9 536.0 L740.4 538.1 L751.1 539.2 L758.2 536.7 L762.5 534.5 L771.0 536.3 L778.8 532.4 L782.4 522.2 L787.4 518.6 L788.1 529.5 L793.1 538.1 M793.1 538.1 L795.9 530.2 L800.9 521.5 L808.7 514.9 L810.8 505.4 L811.9 503.2 M811.9 503.2 L811.2 497.4 L815.1 490.7 L815.1 483.3 L826.5 475.8 M811.9 503.2 L821.5 499.2 L829.3 501.0 L837.9 502.1 L845.0 508.4 L853.5 516.4 L858.5 514.9 M853.5 516.4 L849.2 522.2 L849.2 527.3 L857.1 527.4 L859.6 524.0 M857.1 527.4 L857.8 530.2 L864.9 541.7 L886.2 548.9 L893.3 548.9 L872.0 570.4 L857.8 572.5 L850.7 576.1 L850.0 577.9 M850.0 577.9 L842.1 576.1 L832.9 581.5 L822.9 580.4 L814.4 574.7 L807.6 573.3 M807.6 573.3 L803.0 567.5 L798.8 558.2 L791.6 551.1 L786.7 548.9 L794.5 545.3 L793.1 538.1 M850.0 577.9 L843.6 586.1 L843.6 612.0 L847.5 617.7 M830.8 639.1 L819.4 630.9 L820.1 627.3 L793.8 613.1 L768.9 613.5 M793.1 605.3 L797.3 598.2 L800.9 592.5 L796.6 579.7 L793.8 576.1 L807.6 573.3 M793.8 576.1 L790.2 579.3 L781.0 580.4 L773.9 579.0 L771.4 581.1 M771.4 581.1 L761.8 573.3 L754.0 575.4 L746.8 570.0 M771.4 581.1 L774.6 590.7 L766.8 597.5 L765.0 602.4 L762.5 609.6 L762.5 616.0 M762.5 616.0 L768.9 613.5 L771.4 622.4 L768.9 623.1 L764.6 625.2 L758.2 625.2 L759.6 618.1 L762.5 616.0 M768.9 623.1 L771.0 629.5 L765.3 637.3 L761.1 637.7 M770.7 664.5 L786.0 673.1 L793.1 673.9 M800.2 688.8 L806.6 688.3 L818.7 689.8 L825.8 686.9 L839.6 681.1 M786.3 673.1 L788.8 683.3 L786.7 694.9 L784.5 703.6 L788.1 706.6 L796.6 709.5 L797.7 716.1 L795.9 721.3 L803.0 729.4 L806.6 721.3 L806.6 712.4 L800.2 702.9 M770.7 664.5 L757.5 666.7 L754.0 672.4 L755.4 677.5 L754.0 691.2 L758.2 694.9 L763.9 693.1 L763.9 702.5 L758.2 702.2 L754.0 695.6 L745.4 689.1 L731.9 686.2 L725.5 685.4 L722.7 684.0 M722.7 684.0 L722.7 699.2 L708.4 699.2 L708.4 722.8 L718.4 733.2 M731.6 734.7 L744.0 735.8 L756.8 725.0 L768.2 718.3 M768.2 718.3 L766.8 712.4 L788.1 706.6 M768.2 718.3 L774.6 721.3 L786.0 726.5 L786.7 736.2 L784.5 743.7 L786.7 749.7 L783.1 761.1 L774.6 769.5 M731.6 734.7 L736.9 744.4 L746.1 755.0 L751.1 763.4 L760.7 768.0 L774.6 769.5 M774.6 769.5 L779.6 785.8 L779.6 796.8 L780.3 803.9 L786.0 804.3 M772.4 795.6 L779.2 797.2 L780.3 803.9 L774.6 807.9 L771.0 803.9 L772.4 795.6 M755.4 818.4 L761.1 824.1 L758.9 829.4 L751.1 834.7 L744.0 826.5 L749.0 820.8 L755.4 818.4 M760.7 768.0 L753.2 771.0 L744.0 779.2 L739.7 786.6 L734.0 794.4 L724.8 795.2 L715.6 792.1 L708.4 802.7 L699.9 804.3 L694.2 787.7 M694.2 816.8 L694.2 766.4 L701.3 766.4 L701.3 738.4 L717.7 736.2 L726.9 736.2 L731.6 734.7 M694.2 816.8 L687.1 821.2 L677.2 819.2 L669.3 818.4 M635.6 730.6 L648.0 728.7 L653.0 731.7 L682.8 731.7 L704.2 735.8 L718.4 733.2 M639.5 648.7 L647.3 647.7 L670.0 647.7 L672.9 658.1 L690.0 655.9 L690.7 663.1 L707.0 658.1 L707.0 676.0 L709.9 686.2 L722.7 684.0 M433.2 517.5 L441.1 516.8 L454.6 515.3 L470.9 517.1 L470.9 519.7 M470.9 517.1 L465.2 499.6 L452.4 488.5 L436.1 488.5 L434.7 490.3 M465.2 499.6 L470.2 494.4 L475.9 495.1 L485.2 494.4 L512.9 494.4 L514.3 488.5 L512.2 487.0 M444.6 527.3 L454.6 522.2 L454.6 515.3 M457.4 541.4 L463.1 535.2 L472.4 534.5 L476.6 541.7 L478.8 545.3 L476.6 548.9 L470.2 556.5 M478.8 545.3 L485.2 553.2 L491.6 551.8 L493.0 561.1 L499.4 564.7 L498.3 574.7 M491.6 551.8 L495.1 545.3 L495.8 533.1 L507.9 530.2 L512.9 531.6 M470.9 519.7 L478.8 518.6 L489.4 527.3 L495.1 533.1 M512.9 531.6 L521.4 536.7 L532.8 538.1 L532.1 549.6 L529.2 559.7 L532.1 569.7 M512.9 531.6 L514.3 521.5 L520.7 515.7 L528.5 510.6 L537.8 504.0 L547.0 497.7 L553.4 498.5 M532.8 538.1 L532.1 527.3 L552.0 526.6 L558.4 527.3 M553.4 498.5 L554.8 505.4 L559.1 512.8 L567.6 517.1 L569.1 520.8 L577.6 522.2 M558.4 527.3 L553.4 534.5 L555.6 545.3 L556.3 556.1 L560.5 562.5 M558.4 527.3 L562.0 534.5 L563.7 541.7 L563.4 561.5 M569.1 520.8 L562.0 524.4 L558.4 527.3 M795.6 371.4 L800.2 386.3 M800.7 386.0 L803.7 373.9 L804.8 362.2 L805.5 359.7 M801.6 356.3 L805.5 355.0 L810.8 348.6 L812.3 346.9 L810.8 343.0 L807.8 343.0 M806.2 359.3 L813.7 363.1 L827.9 354.0 M827.9 354.0 L843.6 345.2 L845.0 334.8 L846.4 326.9 L853.2 321.5 M807.6 331.7 L813.0 329.1 L812.6 324.2 L822.2 323.8 L836.4 324.2 L853.2 321.5 L870.6 321.5 M800.9 387.5 L808.7 388.7 L818.7 382.2 L822.2 378.1 L815.1 369.8 L830.8 364.3 L827.9 354.0 M830.8 364.3 L839.3 366.0 L851.4 373.1 L869.9 388.7 L882.7 389.5 L889.4 390.4 L891.2 394.0 L896.3 394.0 M883.0 389.5 L886.2 382.2 L893.0 382.2 M897.2 382.6 L893.3 378.1 L891.2 373.9 L892.3 367.3 L879.8 357.2 L874.8 348.6 L877.7 340.0 L880.5 333.0 L874.8 331.3 L870.6 321.5 M870.6 321.5 L867.0 309.8 L867.7 300.7 L870.6 297.9 M856.4 487.8 L859.2 480.3 L868.4 480.3 L882.0 481.4 L889.8 483.3 L901.2 471.3 L921.8 468.3 M921.8 468.3 L929.6 485.9 M921.8 468.3 L943.1 460.8 L947.7 445.6 L944.5 440.2 M944.5 440.2 L925.7 438.3 L918.9 429.3 M944.5 440.2 L948.8 428.6 L950.9 424.6 L952.7 422.7 M913.2 424.3 L916.1 425.4 M935.3 319.3 L941.7 318.9 L950.2 312.6 L959.5 313.5 L967.3 317.1 L973.7 318.0 L980.8 325.5 L986.8 326.0 L987.2 334.8 M987.2 334.8 L982.6 348.6 L982.2 357.2 L984.7 369.8 L991.5 370.6 L990.8 375.6 L984.9 383.3 M984.9 383.3 L991.5 393.6 L998.6 396.4 L998.6 404.5 L1002.1 405.3 L1001.4 409.7 L991.8 412.8 L990.0 420.7 M870.6 297.9 L879.8 305.3 L882.7 305.3 L891.9 297.9 L895.8 300.7 L893.3 306.2 L897.6 309.8 L899.5 309.6 M987.2 334.8 L995.0 337.4 L1000.7 332.6 L1010.7 328.6 L1018.5 320.2 L1024.9 319.3 M1024.9 319.3 L1034.1 320.6 L1035.6 322.4 L1044.8 321.5 L1051.2 317.1 L1056.2 309.8 L1059.4 311.7 L1061.2 322.4 L1060.1 325.1 L1068.3 322.4 L1076.8 318.9 L1084.6 320.2 M1084.6 320.2 L1078.2 324.2 L1061.2 327.8 L1058.3 340.0 L1057.6 348.6 L1049.8 349.5 L1049.1 356.3 L1044.8 366.4 L1035.6 368.9 L1024.2 374.8 L1023.5 383.4 L1007.1 387.1 L996.4 387.1 L984.9 383.3 M1037.0 432.8 L1041.2 427.8 L1056.9 427.0 L1050.5 416.8 L1051.9 409.7 L1046.2 406.5 L1052.6 398.5 L1063.3 398.9 L1071.1 388.7 L1077.5 380.5 L1082.5 373.1 L1081.8 365.6 L1087.5 363.1 L1081.1 358.9 L1078.2 348.6 L1088.9 343.9 L1099.6 340.0 L1105.2 335.7 M1084.6 320.2 L1091.7 326.0 L1105.2 335.7 L1113.1 346.1 L1111.6 357.2 L1115.2 361.4 L1109.5 361.4 L1112.4 372.3 L1122.3 377.3 L1128.0 380.5 M1128.0 380.5 L1135.8 379.7 L1145.8 388.7 L1150.8 391.2 L1157.9 396.0 L1163.6 399.3 L1178.5 399.7 M1128.0 380.5 L1121.6 392.0 L1129.4 395.2 L1140.1 400.9 L1144.4 403.7 L1150.0 402.5 L1156.4 407.7 L1162.1 409.7 L1171.4 411.2 L1178.5 411.2 L1178.5 399.7 M1178.5 399.7 L1183.5 404.1 L1184.9 407.7 L1192.0 408.5 L1206.2 407.7 L1206.9 404.1 L1203.4 400.1 L1195.6 397.6 L1188.4 397.6 L1183.5 404.1 M1206.9 400.1 L1216.9 392.8 L1227.6 388.7 L1235.4 387.1 L1244.3 396.8 M1185.2 445.6 L1184.2 436.3 L1182.8 429.3 L1178.5 426.2 L1179.2 416.0 L1180.6 410.5 L1188.4 413.6 L1190.9 419.9 L1209.1 421.9 L1207.6 427.8 L1201.2 429.3 L1200.5 434.0 L1203.4 438.3 L1208.4 432.4 L1210.5 445.6 L1208.4 450.9 L1208.4 455.5 M1210.5 445.6 L1214.8 444.0 L1216.2 430.1 L1224.7 420.7 L1229.0 409.7 L1236.1 404.1 L1244.3 396.8 M1244.3 396.8 L1249.6 401.7 L1253.9 414.4 L1246.0 423.9 L1246.0 430.9 L1255.3 436.3 L1259.6 445.6 L1264.5 449.4 L1271.3 448.6 L1277.3 451.7 M1263.8 458.1 L1256.0 462.3 L1247.5 471.3 L1244.6 472.1 L1253.2 488.5 L1250.3 496.6 L1257.4 508.4 L1260.6 521.5 L1254.6 533.1 L1252.8 534.5 M1263.8 458.1 L1266.7 464.6 L1271.6 464.6 L1270.2 477.3 L1277.3 475.8 M847.5 280.9 L856.4 280.1 L861.0 284.9 L862.8 294.2 L870.6 297.9 M836.4 262.8 L850.7 264.7 L863.5 270.5 L873.4 269.6 L882.3 277.3 M882.3 277.3 L883.4 284.9 L872.0 283.0 L861.0 284.9 M882.3 277.3 L888.4 282.0 L892.6 283.9 L897.6 277.7 M872.0 283.0 L876.3 287.7 L879.1 293.3 L882.7 299.8 L882.7 305.3 M870.6 297.9 L873.4 298.9 L879.1 301.6 L879.8 305.3 M45.0 521.5 L36.4 526.6 L32.9 540.3 L37.2 546.1 L37.2 553.2 L53.5 556.1 L58.5 562.5 L72.0 561.8 L69.9 574.0 L73.4 581.8 L69.9 586.1 L74.1 589.6 L76.3 597.5 M76.3 597.5 L74.8 593.9 L55.6 593.9 L55.6 598.2 L59.9 598.9 L58.5 613.1 L54.6 635.9 M54.6 635.9 L49.2 633.0 L53.9 625.2 L33.6 623.1 L31.5 618.8 L22.9 609.6 L16.5 606.7 L4.4 603.2 M16.5 606.7 L14.4 616.7 L4.4 625.9 M54.6 635.9 L33.6 642.3 L27.9 655.2 L25.8 659.5 L33.6 673.1 L38.6 677.5 L50.0 676.0 L50.0 684.7 L57.1 684.3 M57.1 684.3 L63.5 695.6 L61.3 704.4 L58.5 713.9 L59.9 720.5 L61.3 725.0 L57.8 732.4 L51.4 738.8 M57.8 732.4 L62.0 743.7 L65.2 758.0 L69.2 772.6 L74.1 772.6 M57.1 684.3 L64.2 685.4 L86.9 675.3 L87.6 684.7 L94.0 694.9 L105.4 699.2 L121.8 705.1 L123.9 723.1 L136.7 723.5 L137.4 730.9 L143.1 737.7 L141.0 743.7 L138.5 752.3 M138.5 752.3 L131.7 745.9 L113.2 748.2 L109.0 755.0 L106.5 768.4 M106.5 768.4 L97.6 766.4 L94.8 772.6 L88.4 767.2 L81.2 764.9 L74.1 772.6 M74.1 772.6 L75.6 774.1 L66.3 785.8 L64.9 800.0 L56.4 816.8 L54.2 833.1 L50.7 842.2 L54.2 857.4 L54.9 865.9 L50.7 874.6 L46.4 894.0 L47.1 905.8 L41.4 921.5 L41.4 936.6 L42.1 955.1 L45.0 968.1 L41.4 982.5 L37.9 990.8 L36.4 1006.8 L30.0 1017.8 L32.9 1027.8 M106.5 768.4 L118.2 780.3 L133.2 788.9 L142.4 792.8 L135.3 807.1 L151.6 808.7 L154.5 807.9 L163.7 794.4 M138.5 752.3 L140.3 767.2 L155.2 768.7 L158.0 781.1 L165.9 782.3 L163.7 794.4 M163.7 794.4 L170.1 800.0 L169.4 806.7 L155.2 816.8 L142.4 831.5 M142.4 831.5 L153.8 837.2 L156.6 836.8 L168.0 845.6 L173.7 852.3 L172.3 861.2 M142.4 831.5 L138.1 846.4 L136.7 862.5 M76.3 597.5 L86.2 600.3 L101.2 590.4 L96.9 588.2 L95.5 576.8 L105.4 579.7 L111.1 576.8 L120.4 569.0 M120.4 569.0 L115.4 563.6 L117.5 558.2 L123.2 556.1 L125.3 546.1 M120.4 569.0 L125.7 570.4 L125.3 574.0 L128.2 578.2 L126.0 589.6 L132.4 596.8 L139.6 594.6 L150.2 592.5 M150.2 592.5 L144.5 582.5 L139.6 577.5 L144.5 568.3 L146.0 564.0 M150.2 592.5 L154.5 591.8 L163.7 589.6 M163.7 589.6 L168.0 580.4 L164.8 570.4 L168.0 565.0 M163.7 589.6 L175.8 590.4 L184.7 577.2 M489.1 277.3 L493.7 275.4 L505.1 276.8 L507.9 280.1 L502.9 285.8 L502.9 293.3 L502.2 297.9 L498.7 298.9 L502.2 304.4 L500.1 309.8 L502.2 311.7 L498.7 318.0 L499.4 320.6 M539.2 263.3 L547.0 267.6 L557.0 268.6 L562.3 270.5 L564.4 271.5 L574.4 272.2 M605.3 258.8 L606.8 255.4 L601.1 252.9 L601.8 246.9 L600.4 238.8 L602.1 237.8 M602.1 237.8 L600.4 232.6 L595.4 234.7 L595.4 230.6 L601.8 222.2 L606.0 220.1 M606.0 220.1 L610.3 205.2 L597.5 200.3 M597.5 200.3 L593.2 199.2 L586.8 196.4 L586.1 192.5 L581.9 194.2 L574.8 185.8 L570.1 181.9 M575.8 178.8 L582.6 178.5 L588.3 177.9 L593.6 181.3 L592.2 185.3 L594.7 185.8 M594.7 185.8 L597.5 190.9 L595.4 192.5 L592.9 195.9 L593.2 199.2 M595.4 192.5 L598.2 196.4 L597.5 200.3 M594.7 185.8 L594.7 173.9 L600.4 172.2 L602.1 168.7 L602.1 156.4 M613.5 137.0 L619.2 138.2 M653.3 149.2 L654.4 157.6 L652.6 161.7 L656.2 165.8 L656.9 176.2 L658.7 183.0 L657.2 184.7 M657.2 184.7 L653.7 183.0 L644.4 189.2 L638.0 190.9 L640.9 196.4 L650.1 207.9 M650.1 207.9 L644.4 212.7 L642.7 219.6 L638.0 220.1 L626.3 220.7 L620.3 220.7 M620.3 220.7 L613.2 218.5 L606.0 220.1 M602.1 237.8 L608.2 237.3 L612.1 232.6 L616.0 238.3 L618.1 232.1 L623.8 234.2 L626.3 228.0 M626.3 228.0 L620.3 225.4 L620.3 220.7 M626.3 228.0 L630.2 228.5 L638.8 225.9 L640.2 229.5 L649.4 231.6 M649.4 231.6 L648.0 236.8 L650.1 240.8 M649.4 231.6 L655.8 232.1 L663.3 229.5 L666.5 228.0 M666.5 228.0 L669.3 226.4 L669.0 219.1 L673.6 215.9 M650.1 207.9 L656.5 209.5 L658.7 205.2 L665.8 207.9 L672.5 209.5 L673.6 215.9 M657.2 184.7 L660.8 183.0 L667.9 187.0 L672.2 189.8 L677.9 190.9 L686.0 199.7 M686.0 199.7 L680.7 204.6 L674.3 206.8 L672.5 209.5 M686.0 199.7 L692.8 203.0 L694.9 203.0 L701.3 200.8 L712.4 204.3 M673.6 215.9 L678.6 218.5 L685.7 218.0 L693.5 214.3 L700.6 210.0 L709.5 211.6 M709.5 211.6 L712.4 204.3 M712.4 204.3 L713.4 198.6 L723.4 188.1 L719.8 177.3 M719.8 177.3 L720.2 170.5 L717.0 168.1 L722.0 163.5 L719.1 148.6 M719.1 148.6 L714.1 143.7 L691.7 142.5 M714.1 143.7 L713.4 136.3 L703.5 132.6 L701.7 132.0 M701.7 122.3 L709.2 118.1 L729.1 118.1 L741.2 127.2 M741.2 127.2 L742.6 132.0 L735.1 138.2 L733.3 144.3 L719.1 148.6 M725.2 98.8 L731.9 97.0 L740.4 103.0 L746.5 103.0 M746.5 103.0 L749.0 106.3 L752.5 121.3 L748.3 125.7 L741.2 127.2 M746.5 103.0 L747.6 94.4 L751.1 79.3 L751.5 76.9 M752.5 121.3 L771.7 128.2 L771.0 138.2 L784.5 154.6 L778.1 158.7 L778.1 170.5 M778.1 170.5 L769.6 179.6 L759.6 176.2 L745.4 174.5 L731.2 172.2 L719.8 177.3 M778.1 170.5 L792.4 167.5 L796.6 180.2 L805.2 190.3 L818.7 189.8 L822.2 195.3 L837.2 198.6 L834.3 217.5 L823.6 225.4 M709.5 211.6 L714.8 216.4 L729.1 218.5 L741.2 213.2 M741.2 213.2 L747.6 211.1 L758.9 216.4 L762.5 232.6 L766.0 232.6 L757.9 236.8 L752.5 242.4 M741.2 213.2 L748.3 223.3 L751.8 232.6 L752.5 242.4 L762.8 244.9 M714.8 216.4 L706.0 226.4 L702.0 234.2 L696.0 235.7 M696.0 235.7 L686.4 237.8 L675.0 237.3 L669.7 231.6 L666.5 228.0 M696.0 235.7 L704.2 244.9 L704.2 248.9 L711.6 249.9 L713.1 254.9 M713.1 254.9 L715.6 258.8 L732.6 260.3 L744.0 255.4 L755.0 259.3 M713.1 254.9 L711.3 260.8 L715.6 265.2 L711.3 273.4 L715.2 282.5 M715.2 282.5 L726.2 280.6 L731.9 283.5 L739.4 279.2 L751.1 276.3 M739.4 279.2 L741.2 282.5 L737.2 288.2 M694.2 297.9 L699.2 294.2 L701.3 287.2 L715.2 282.5 M689.6 277.7 L691.4 271.0 L694.9 271.0 L698.1 277.3 L697.8 283.0 L701.3 287.2 M664.0 244.9 L672.2 244.4 L687.1 248.4 M664.0 244.9 L667.2 254.9 L677.2 266.2 L683.2 271.0 M687.1 248.4 L689.6 253.9 L690.7 260.8 L685.0 264.7 L683.2 271.0 M648.7 242.4 L660.8 242.4 L663.3 234.7 L669.7 231.6 M687.1 248.4 L687.5 241.8 L686.4 237.8 M694.9 271.0 L698.5 264.7 L707.0 273.4 L711.3 273.4 M698.1 277.3 L705.6 273.9 L711.3 273.4 M633.4 84.8 L635.2 75.1 L640.9 66.6 L639.5 55.0 L643.4 49.8 L638.4 44.6 L639.5 35.5 L637.7 20.0 L643.0 5.5 M749.7 61.5 L759.6 50.6 L773.9 32.4 L776.0 26.2 L765.3 12.8 L768.9 3.8 M1024.9 319.3 L1025.6 313.5 L1036.3 305.3 L1032.0 299.8 L1039.8 293.3 L1053.3 295.2 L1054.0 286.8 L1061.9 281.1 L1051.2 276.3 L1042.7 283.0 L1035.6 287.7 L1028.4 283.9 L1024.9 276.3 L1021.3 267.6 L1013.5 259.8 M1056.2 309.8 L1059.7 298.9 L1076.1 299.8 L1076.8 308.9 L1084.6 308.9 L1084.6 320.2 M1076.1 299.8 L1077.5 295.2 L1089.6 290.5 L1098.8 285.8 L1109.5 282.0 L1122.3 274.4 M1051.2 276.3 L1056.9 270.5 L1074.7 271.5 L1083.2 266.7 L1091.0 267.6 L1115.2 268.6 L1122.3 274.4 M1122.3 274.4 L1126.6 264.7 L1123.7 250.9 M538.1 340.4 L539.7 349.3 L542.1 358.9 L545.3 362.9 L543.7 365.4 L532.5 367.8 L522.8 378.2 L514.8 386.2 L500.3 388.7 L491.5 394.3 L490.7 402.3 M459.4 402.3 L490.7 402.3 M490.7 402.3 L490.7 414.4 L468.2 415.2 L467.4 435.3 L459.4 440.9 L459.4 451.3 L432.1 452.1 L431.2 455.3 M490.7 404.7 L516.4 422.4 L561.4 453.7 L565.4 458.6 L574.3 463.4 L575.9 468.2 L582.3 468.2 M516.4 422.4 L506.0 423.2 L506.8 442.5 L510.0 466.6 L512.4 495.0 L514.0 500.3 M582.3 468.2 L637.7 434.5 M637.7 434.5 L635.3 430.4 L627.3 426.4 L623.3 420.0 L620.1 413.6 L623.3 407.1 L622.5 394.3 L620.1 381.4 M620.1 381.4 L618.5 371.8 L612.0 360.5 L610.4 346.1 L612.0 330.0 L612.8 326.8 M620.1 381.4 L624.9 378.2 L625.7 370.2 L634.5 362.1 L635.3 358.1 M637.7 434.5 L653.8 440.9 L659.4 438.5 M900.0 232.5 L887.5 220.0 L882.5 210.0 L885.0 197.5 L900.0 185.0 L915.0 175.0 L940.0 186.2 L977.5 187.5 L990.0 185.0 L980.0 172.5 L991.2 162.5 L986.2 150.0 L1040.0 131.2 L1057.5 135.0 L1060.0 145.0 L1075.0 155.0 L1098.8 143.8 L1122.5 186.2 L1147.5 185.0 L1160.0 197.5 L1172.5 203.8 M1172.5 203.8 L1210.0 186.2 L1230.0 195.0 L1250.0 192.5 L1255.0 172.5 L1271.2 175.0 L1275.0 180.0 M1172.5 203.8 L1185.0 217.5 L1200.0 237.5 L1225.0 250.0 L1240.0 265.0 L1275.0 275.0 M1172.5 203.8 L1162.5 215.0 L1160.0 227.5 L1142.5 225.0 L1137.5 240.0 L1122.5 250.0 M951.1 283.1 L951.1 247.7 L968.8 242.0 L993.3 262.7 L1014.5 260.6 L1022.6 269.5 L1026.7 284.5 L1038.3 289.3 M951.1 283.1 L957.2 281.8 L958.6 277.7 L968.1 270.2 L979.0 276.3 L981.8 283.1 L992.7 285.9 L998.1 295.4 L1017.2 313.1 L1025.4 328.8 M951.1 283.1 L946.3 283.1 L936.8 273.6 L927.2 279.0 M52.6 234.0 L61.4 222.6 L70.1 225.2 L71.0 235.7 M9.6 255.0 L21.0 248.0 L45.6 247.1 L52.6 234.0 M31.6 248.0 L30.7 269.0 M43.0 248.0 L37.7 269.0 M30.7 269.0 L47.3 270.8 M9.6 274.3 L29.8 274.3 L30.7 284.8 L22.8 288.3 L19.3 295.3 M30.7 284.8 L43.8 283.9" fill="none" stroke="#646462" stroke-width="1.15" stroke-linejoin="round"/>
<text class="lbl" x="737.0" y="27.4" font-size="15" letter-spacing="-0.35">Finland</text>
<text class="lbt" x="737.0" y="27.4" font-size="15" letter-spacing="-0.35">Finland</text>
<text class="lbl" x="656.0" y="80.4" font-size="15" letter-spacing="-0.35">Sweden</text>
<text class="lbt" x="656.0" y="80.4" font-size="15" letter-spacing="-0.35">Sweden</text>
<text class="lbl" x="626.0" y="133.4" font-size="15" letter-spacing="-0.35">Denmark</text>
<text class="lbt" x="626.0" y="133.4" font-size="15" letter-spacing="-0.35">Denmark</text>
<text class="lbl" x="529.0" y="135.4" font-size="15" letter-spacing="-0.35">United</text>
<text class="lbt" x="529.0" y="135.4" font-size="15" letter-spacing="-0.35">United</text>
<text class="lbl" x="529.0" y="155.4" font-size="15" letter-spacing="-0.35">Kingdom</text>
<text class="lbt" x="529.0" y="155.4" font-size="15" letter-spacing="-0.35">Kingdom</text>
<text class="lbl" x="688.0" y="176.4" font-size="15" letter-spacing="-0.35">Poland</text>
<text class="lbt" x="688.0" y="176.4" font-size="15" letter-spacing="-0.35">Poland</text>
<text class="lbl" x="626.0" y="188.4" font-size="15" letter-spacing="-0.35">Germany</text>
<text class="lbt" x="626.0" y="188.4" font-size="15" letter-spacing="-0.35">Germany</text>
<text class="lbl" x="775.0" y="205.4" font-size="15" letter-spacing="-0.35">Ukraine</text>
<text class="lbt" x="775.0" y="205.4" font-size="15" letter-spacing="-0.35">Ukraine</text>
<text class="lbl" x="1016.0" y="230.4" font-size="15" letter-spacing="-0.35">Kazakhstan</text>
<text class="lbt" x="1016.0" y="230.4" font-size="15" letter-spacing="-0.35">Kazakhstan</text>
<text class="lbl" x="566.0" y="236.4" font-size="15" letter-spacing="-0.35">France</text>
<text class="lbt" x="566.0" y="236.4" font-size="15" letter-spacing="-0.35">France</text>
<text class="lbl" x="728.0" y="243.4" font-size="15" letter-spacing="-0.35">Romania</text>
<text class="lbt" x="728.0" y="243.4" font-size="15" letter-spacing="-0.35">Romania</text>
<text class="lbl" x="642.0" y="276.4" font-size="15" letter-spacing="-0.35">Italy</text>
<text class="lbt" x="642.0" y="276.4" font-size="15" letter-spacing="-0.35">Italy</text>
<text class="lbl" x="518.0" y="307.4" font-size="15" letter-spacing="-0.35">Spain</text>
<text class="lbt" x="518.0" y="307.4" font-size="15" letter-spacing="-0.35">Spain</text>
<text class="lbl" x="709.0" y="310.4" font-size="15" letter-spacing="-0.35">Greece</text>
<text class="lbt" x="709.0" y="310.4" font-size="15" letter-spacing="-0.35">Greece</text>
<text class="lbl" x="800.0" y="310.4" font-size="15" letter-spacing="-0.35">Turkey</text>
<text class="lbt" x="800.0" y="310.4" font-size="15" letter-spacing="-0.35">Turkey</text>
<text class="lbl" x="975.0" y="307.4" font-size="15" letter-spacing="-0.35">Turkmenistan</text>
<text class="lbt" x="975.0" y="307.4" font-size="15" letter-spacing="-0.35">Turkmenistan</text>
<text class="lbl" x="829.0" y="349.4" font-size="15" letter-spacing="-0.35">Syria</text>
<text class="lbt" x="829.0" y="349.4" font-size="15" letter-spacing="-0.35">Syria</text>
<text class="lbl" x="619.0" y="356.4" font-size="15" letter-spacing="-0.35">Tunisia</text>
<text class="lbt" x="619.0" y="356.4" font-size="15" letter-spacing="-0.35">Tunisia</text>
<text class="lbl" x="866.0" y="362.4" font-size="15" letter-spacing="-0.35">Iraq</text>
<text class="lbt" x="866.0" y="362.4" font-size="15" letter-spacing="-0.35">Iraq</text>
<text class="lbl" x="940.0" y="366.4" font-size="15" letter-spacing="-0.35">Iran</text>
<text class="lbt" x="940.0" y="366.4" font-size="15" letter-spacing="-0.35">Iran</text>
<text class="lbl" x="1024.0" y="357.4" font-size="15" letter-spacing="-0.35">Afghanistan</text>
<text class="lbt" x="1024.0" y="357.4" font-size="15" letter-spacing="-0.35">Afghanistan</text>
<text class="lbl" x="500.0" y="379.4" font-size="15" letter-spacing="-0.35">Morocco</text>
<text class="lbt" x="500.0" y="379.4" font-size="15" letter-spacing="-0.35">Morocco</text>
<text class="lbl" x="1059.0" y="385.4" font-size="15" letter-spacing="-0.35">Pakistan</text>
<text class="lbt" x="1059.0" y="385.4" font-size="15" letter-spacing="-0.35">Pakistan</text>
<text class="lbl" x="574.0" y="404.4" font-size="15" letter-spacing="-0.35">Algeria</text>
<text class="lbt" x="574.0" y="404.4" font-size="15" letter-spacing="-0.35">Algeria</text>
<text class="lbl" x="681.0" y="414.4" font-size="15" letter-spacing="-0.35">Libya</text>
<text class="lbt" x="681.0" y="414.4" font-size="15" letter-spacing="-0.35">Libya</text>
<text class="lbl" x="760.0" y="418.4" font-size="15" letter-spacing="-0.35">Egypt</text>
<text class="lbt" x="760.0" y="418.4" font-size="15" letter-spacing="-0.35">Egypt</text>
<text class="lbl" x="853.0" y="423.4" font-size="15" letter-spacing="-0.35">Saudi Arabia</text>
<text class="lbt" x="853.0" y="423.4" font-size="15" letter-spacing="-0.35">Saudi Arabia</text>
<text class="lbl" x="1149.0" y="403.4" font-size="15" letter-spacing="-0.35">Nepal</text>
<text class="lbt" x="1149.0" y="403.4" font-size="15" letter-spacing="-0.35">Nepal</text>
<text class="lbl" x="1195.0" y="432.4" font-size="15" letter-spacing="-0.35">Bangladesh</text>
<text class="lbt" x="1195.0" y="432.4" font-size="15" letter-spacing="-0.35">Bangladesh</text>
<text class="lbl" x="1113.0" y="448.4" font-size="15" letter-spacing="-0.35">India</text>
<text class="lbt" x="1113.0" y="448.4" font-size="15" letter-spacing="-0.35">India</text>
<text class="lbl" x="957.0" y="459.4" font-size="15" letter-spacing="-0.35">Oman</text>
<text class="lbt" x="957.0" y="459.4" font-size="15" letter-spacing="-0.35">Oman</text>
<text class="lbl" x="486.0" y="465.4" font-size="15" letter-spacing="-0.35">Mauritania</text>
<text class="lbt" x="486.0" y="465.4" font-size="15" letter-spacing="-0.35">Mauritania</text>
<text class="lbl" x="536.0" y="493.4" font-size="15" letter-spacing="-0.35">Mali</text>
<text class="lbt" x="536.0" y="493.4" font-size="15" letter-spacing="-0.35">Mali</text>
<text class="lbl" x="618.0" y="484.4" font-size="15" letter-spacing="-0.35">Niger</text>
<text class="lbt" x="618.0" y="484.4" font-size="15" letter-spacing="-0.35">Niger</text>
<text class="lbl" x="687.0" y="499.4" font-size="15" letter-spacing="-0.35">Chad</text>
<text class="lbt" x="687.0" y="499.4" font-size="15" letter-spacing="-0.35">Chad</text>
<text class="lbl" x="762.0" y="506.4" font-size="15" letter-spacing="-0.35">Sudan</text>
<text class="lbt" x="762.0" y="506.4" font-size="15" letter-spacing="-0.35">Sudan</text>
<text class="lbl" x="822.0" y="497.4" font-size="15" letter-spacing="-0.35">Eritrea</text>
<text class="lbt" x="822.0" y="497.4" font-size="15" letter-spacing="-0.35">Eritrea</text>
<text class="lbl" x="893.0" y="494.4" font-size="15" letter-spacing="-0.35">Yemen</text>
<text class="lbt" x="893.0" y="494.4" font-size="15" letter-spacing="-0.35">Yemen</text>
<text class="lbl" x="449.0" y="507.4" font-size="15" letter-spacing="-0.35">Senegal</text>
<text class="lbt" x="449.0" y="507.4" font-size="15" letter-spacing="-0.35">Senegal</text>
<text class="lbl" x="476.0" y="535.4" font-size="15" letter-spacing="-0.35">Guinea</text>
<text class="lbt" x="476.0" y="535.4" font-size="15" letter-spacing="-0.35">Guinea</text>
<text class="lbl" x="609.0" y="543.4" font-size="15" letter-spacing="-0.35">Nigeria</text>
<text class="lbt" x="609.0" y="543.4" font-size="15" letter-spacing="-0.35">Nigeria</text>
<text class="lbl" x="545.0" y="554.4" font-size="15" letter-spacing="-0.35">Ghana</text>
<text class="lbt" x="545.0" y="554.4" font-size="15" letter-spacing="-0.35">Ghana</text>
<text class="lbl" x="486.0" y="571.4" font-size="15" letter-spacing="-0.35">Liberia</text>
<text class="lbt" x="486.0" y="571.4" font-size="15" letter-spacing="-0.35">Liberia</text>
<text class="lbl" x="827.0" y="539.4" font-size="15" letter-spacing="-0.35">Ethiopia</text>
<text class="lbt" x="827.0" y="539.4" font-size="15" letter-spacing="-0.35">Ethiopia</text>
<text class="lbl" x="901.0" y="552.4" font-size="15" letter-spacing="-0.35">Somalia</text>
<text class="lbt" x="901.0" y="552.4" font-size="15" letter-spacing="-0.35">Somalia</text>
<text class="lbl" x="694.0" y="552.4" font-size="15" letter-spacing="-0.35">Central African</text>
<text class="lbt" x="694.0" y="552.4" font-size="15" letter-spacing="-0.35">Central African</text>
<text class="lbl" x="694.0" y="571.4" font-size="15" letter-spacing="-0.35">Republic</text>
<text class="lbt" x="694.0" y="571.4" font-size="15" letter-spacing="-0.35">Republic</text>
<text class="lbl" x="83.0" y="555.4" font-size="15" letter-spacing="-0.35">Venezuela</text>
<text class="lbt" x="83.0" y="555.4" font-size="15" letter-spacing="-0.35">Venezuela</text>
<text class="lbl" x="28.0" y="592.4" font-size="15" letter-spacing="-0.35">Colombia</text>
<text class="lbt" x="28.0" y="592.4" font-size="15" letter-spacing="-0.35">Colombia</text>
<text class="lbl" x="-10.0" y="622.4" font-size="15" letter-spacing="-0.35">Ecuador</text>
<text class="lbt" x="-10.0" y="622.4" font-size="15" letter-spacing="-0.35">Ecuador</text>
<text class="lbl" x="19.0" y="661.4" font-size="15" letter-spacing="-0.35">Peru</text>
<text class="lbt" x="19.0" y="661.4" font-size="15" letter-spacing="-0.35">Peru</text>
<text class="lbl" x="635.0" y="618.4" font-size="15" letter-spacing="-0.35">Gabon</text>
<text class="lbt" x="635.0" y="618.4" font-size="15" letter-spacing="-0.35">Gabon</text>
<text class="lbl" x="826.0" y="602.4" font-size="15" letter-spacing="-0.35">Kenya</text>
<text class="lbt" x="826.0" y="602.4" font-size="15" letter-spacing="-0.35">Kenya</text>
<text class="lbl" x="722.0" y="614.4" font-size="15" letter-spacing="-0.35">Democratic</text>
<text class="lbt" x="722.0" y="614.4" font-size="15" letter-spacing="-0.35">Democratic</text>
<text class="lbl" x="722.0" y="633.4" font-size="15" letter-spacing="-0.35">Republic of</text>
<text class="lbt" x="722.0" y="633.4" font-size="15" letter-spacing="-0.35">Republic of</text>
<text class="lbl" x="722.0" y="652.4" font-size="15" letter-spacing="-0.35">the Congo</text>
<text class="lbt" x="722.0" y="652.4" font-size="15" letter-spacing="-0.35">the Congo</text>
<text class="lbl" x="808.0" y="658.4" font-size="15" letter-spacing="-0.35">Tanzania</text>
<text class="lbt" x="808.0" y="658.4" font-size="15" letter-spacing="-0.35">Tanzania</text>
<text class="lbl" x="174.0" y="686.4" font-size="15" letter-spacing="-0.35">Brazil</text>
<text class="lbt" x="174.0" y="686.4" font-size="15" letter-spacing="-0.35">Brazil</text>
<text class="lbl" x="678.0" y="697.4" font-size="15" letter-spacing="-0.35">Angola</text>
<text class="lbt" x="678.0" y="697.4" font-size="15" letter-spacing="-0.35">Angola</text>
<text class="lbl" x="749.0" y="716.4" font-size="15" letter-spacing="-0.35">Zambia</text>
<text class="lbt" x="749.0" y="716.4" font-size="15" letter-spacing="-0.35">Zambia</text>
<text class="lbl" x="90.0" y="735.4" font-size="15" letter-spacing="-0.35">Bolivia</text>
<text class="lbt" x="90.0" y="735.4" font-size="15" letter-spacing="-0.35">Bolivia</text>
<text class="lbl" x="764.0" y="745.4" font-size="15" letter-spacing="-0.35">Zimbabwe</text>
<text class="lbt" x="764.0" y="745.4" font-size="15" letter-spacing="-0.35">Zimbabwe</text>
<text class="lbl" x="883.0" y="749.4" font-size="15" letter-spacing="-0.35">Madagascar</text>
<text class="lbt" x="883.0" y="749.4" font-size="15" letter-spacing="-0.35">Madagascar</text>
<text class="lbl" x="138.0" y="782.4" font-size="15" letter-spacing="-0.35">Paraguay</text>
<text class="lbt" x="138.0" y="782.4" font-size="15" letter-spacing="-0.35">Paraguay</text>
<text class="lbl" x="727.0" y="781.4" font-size="15" letter-spacing="-0.35">Botswana</text>
<text class="lbt" x="727.0" y="781.4" font-size="15" letter-spacing="-0.35">Botswana</text>
<text class="lbl" x="730.0" y="827.4" font-size="15" letter-spacing="-0.35">South Africa</text>
<text class="lbt" x="730.0" y="827.4" font-size="15" letter-spacing="-0.35">South Africa</text>
<text class="lbl" x="45.0" y="850.4" font-size="15" letter-spacing="-0.35">Chile</text>
<text class="lbt" x="45.0" y="850.4" font-size="15" letter-spacing="-0.35">Chile</text>
<text class="lbl" x="90.0" y="878.4" font-size="15" letter-spacing="-0.35">Argentina</text>
<text class="lbt" x="90.0" y="878.4" font-size="15" letter-spacing="-0.35">Argentina</text>
<text class="lbl" x="-5.0" y="452.4" font-size="15" letter-spacing="-0.35">Cuba</text>
<text class="lbt" x="-5.0" y="452.4" font-size="15" letter-spacing="-0.35">Cuba</text>
<text class="lbl" x="733.0" y="92.5" font-size="12.5" letter-spacing="-0.35">Estonia</text>
<text class="lbt" x="733.0" y="92.5" font-size="12.5" letter-spacing="-0.35">Estonia</text>
<text class="lbl" x="721.0" y="136.5" font-size="12.5" letter-spacing="-0.35">Lithuania</text>
<text class="lbt" x="721.0" y="136.5" font-size="12.5" letter-spacing="-0.35">Lithuania</text>
<text class="lbl" x="647.0" y="229.5" font-size="12.5" letter-spacing="-0.35">Austria</text>
<text class="lbt" x="647.0" y="229.5" font-size="12.5" letter-spacing="-0.35">Austria</text>
<text class="lbl" x="734.0" y="275.5" font-size="12.5" letter-spacing="-0.35">Bulgaria</text>
<text class="lbt" x="734.0" y="275.5" font-size="12.5" letter-spacing="-0.35">Bulgaria</text>
<text class="lbl" x="892.0" y="296.5" font-size="12.5" letter-spacing="-0.35">Azerbaijan</text>
<text class="lbt" x="892.0" y="296.5" font-size="12.5" letter-spacing="-0.35">Azerbaijan</text>
<text class="lbl" x="1084.0" y="286.5" font-size="12.5" letter-spacing="-0.35">Kyrgyzstan</text>
<text class="lbt" x="1084.0" y="286.5" font-size="12.5" letter-spacing="-0.35">Kyrgyzstan</text>
<text class="lbl" x="1056.0" y="312.5" font-size="12.5" letter-spacing="-0.35">Tajikistan</text>
<text class="lbt" x="1056.0" y="312.5" font-size="12.5" letter-spacing="-0.35">Tajikistan</text>
<text class="lbl" x="1196.0" y="406.5" font-size="12.5" letter-spacing="-0.35">Bhutan</text>
<text class="lbt" x="1196.0" y="406.5" font-size="12.5" letter-spacing="-0.35">Bhutan</text>
<text class="lbl" x="540.0" y="524.5" font-size="12.5" letter-spacing="-0.35">Burkina Faso</text>
<text class="lbt" x="540.0" y="524.5" font-size="12.5" letter-spacing="-0.35">Burkina Faso</text>
<text class="lbl" x="1127.0" y="557.5" font-size="12.5" letter-spacing="-0.35">Sri Lanka</text>
<text class="lbt" x="1127.0" y="557.5" font-size="12.5" letter-spacing="-0.35">Sri Lanka</text>
<text class="lbl" x="1074.0" y="578.5" font-size="12.5" letter-spacing="-0.35">Maldives</text>
<text class="lbt" x="1074.0" y="578.5" font-size="12.5" letter-spacing="-0.35">Maldives</text>
<text class="lbl" x="1283.0" y="579.4" font-size="15" letter-spacing="-0.35">Malaysia</text>
<text class="lbt" x="1283.0" y="579.4" font-size="15" letter-spacing="-0.35">Malaysia</text>
<text class="lbl" x="1292.0" y="234.9" font-size="15" letter-spacing="-0.35">Mongolia</text>
<text class="lbt" x="1292.0" y="234.9" font-size="15" letter-spacing="-0.35">Mongolia</text>
<text class="lbs" x="-12.0" y="344.5" font-size="9.9" letter-spacing="-0.55">CAROLINA</text>
<text class="lbl" x="1293.0" y="600.5" font-size="12.5" letter-spacing="-0.35">Singapore</text>
<text class="lbt" x="1293.0" y="600.5" font-size="12.5" letter-spacing="-0.35">Singapore</text>
<text class="lbl" x="961.0" y="758.5" font-size="12.5" letter-spacing="-0.35">Mauritius</text>
<text class="lbt" x="961.0" y="758.5" font-size="12.5" letter-spacing="-0.35">Mauritius</text>
<text class="lbs" x="117.0" y="148.5" font-size="9.9" letter-spacing="-0.55">NEWFOUNDLAND</text>
<text class="lbs" x="117.0" y="160.5" font-size="9.9" letter-spacing="-0.55">AND LABRADOR</text>
<text class="lbs" x="42.0" y="170.5" font-size="9.9" letter-spacing="-0.55">QUÉBEC</text>
<text class="lbs" x="64.0" y="243.0" font-size="9.9" letter-spacing="-0.55">MAINE</text>
<text class="lbs" x="14.0" y="269.5" font-size="9.9" letter-spacing="-0.55">NEW YORK</text>
<text class="lbs" x="24.0" y="298.5" font-size="9.9" letter-spacing="-0.55">NEW JERSEY</text>
<text class="lbs" x="1156.0" y="298.5" font-size="9.9" letter-spacing="-0.55">XINJIANG</text>
<text class="lbs" x="1236.0" y="338.5" font-size="9.9" letter-spacing="-0.55">QINGHAI</text>
<text class="lbs" x="1178.0" y="371.5" font-size="9.9" letter-spacing="-0.55">TIBET</text>
<text class="lbs" x="1281.0" y="376.5" font-size="9.9" letter-spacing="-0.55">SICHUAN</text>
<text class="lbs" x="1284.0" y="388.5" font-size="9.9" letter-spacing="-0.55">PROVINCE</text>
<text class="lbs" x="116.0" y="595.5" font-size="9.9" letter-spacing="-0.55">RORAIMA</text>
<text class="lbs" x="183.0" y="600.5" font-size="9.9" letter-spacing="-0.55">AMAPÁ</text>
<text class="lbs" x="101.0" y="641.5" font-size="9.9" letter-spacing="-0.55">AMAZONAS</text>
<text class="lbs" x="177.0" y="643.5" font-size="9.9" letter-spacing="-0.55">PARÁ</text>
<text class="lbs" x="293.0" y="644.5" font-size="9.9" letter-spacing="-0.55">RIO GRANDE</text>
<text class="lbs" x="293.0" y="656.5" font-size="9.9" letter-spacing="-0.55">DO NORTE</text>
<text class="lbs" x="106.0" y="688.5" font-size="9.9" letter-spacing="-0.55">RONDÔNIA</text>
<text class="lbs" x="287.0" y="686.5" font-size="9.9" letter-spacing="-0.55">SERGIPE</text>
<text class="lbs" x="212.0" y="717.5" font-size="9.9" letter-spacing="-0.55">FEDERAL</text>
<text class="lbs" x="212.0" y="729.5" font-size="9.9" letter-spacing="-0.55">DISTRICT</text>
<text class="lbs" x="267.0" y="745.5" font-size="9.9" letter-spacing="-0.55">ESPÍRITO</text>
<text class="lbs" x="267.0" y="757.5" font-size="9.9" letter-spacing="-0.55">SANTO</text>
<text class="lbs" x="170.0" y="826.5" font-size="9.9" letter-spacing="-0.55">RIO GRANDE</text>
<text class="lbs" x="170.0" y="838.5" font-size="9.9" letter-spacing="-0.55">DO SUL</text>
<text class="oc" x="301.0" y="360.2" font-size="23">Atlantic</text>
<text class="oc" x="301.0" y="390.2" font-size="23">Ocean</text>
<text class="oc" x="418.0" y="857.2" font-size="23">Atlantic</text>
<text class="oc" x="418.0" y="887.2" font-size="23">Ocean</text>
<text class="oc" x="1138.0" y="871.2" font-size="23">Indian Ocean</text>
<circle cx="1287.5" cy="228.8" r="24.40" fill="#3d55ae" fill-opacity=".2" stroke="#3d55ae" stroke-width="3.75"/>
<circle cx="1277.6" cy="336.8" r="20.00" fill="#a0244f" fill-opacity=".2" stroke="#a0244f" stroke-width="3.75"/>
<circle cx="1271.0" cy="498.1" r="16.40" fill="#cda43e" fill-opacity=".2" stroke="#cda43e" stroke-width="3.75"/>
<circle cx="8.7" cy="421.0" r="17.40" fill="#d0a33a" fill-opacity=".2" stroke="#d0a33a" stroke-width="3.75"/>
<circle cx="129.3" cy="512.3" r="16.00" fill="#5fb87a" fill-opacity=".2" stroke="#5fb87a" stroke-width="3.75"/>
<circle cx="33.0" cy="579.1" r="16.00" fill="#d9bb78" fill-opacity=".2" stroke="#d9bb78" stroke-width="3.75"/>
<circle cx="95.8" cy="729.5" r="16.20" fill="#d0a43c" fill-opacity=".2" stroke="#d0a43c" stroke-width="3.75"/>
<circle cx="382.4" cy="492.0" r="16.10" fill="#8c2447" fill-opacity=".2" stroke="#8c2447" stroke-width="3.75"/>
<circle cx="679.4" cy="255.8" r="22.50" fill="#3d55ae" fill-opacity=".2" stroke="#3d55ae" stroke-width="3.75"/>
<circle cx="826.9" cy="340.6" r="20.00" fill="#d6bb74" fill-opacity=".2" stroke="#d6bb74" stroke-width="3.75"/>
<circle cx="571.4" cy="398.3" r="18.10" fill="#e7d9b7" fill-opacity=".2" stroke="#e7d9b7" stroke-width="3.75"/>
<circle cx="1022.5" cy="351.0" r="18.50" fill="#dcc27c" fill-opacity=".2" stroke="#dcc27c" stroke-width="3.75"/>
<circle cx="1046.5" cy="383.5" r="18.50" fill="#c48a12" fill-opacity=".2" stroke="#c48a12" stroke-width="3.75"/>
<circle cx="1149.7" cy="397.3" r="18.30" fill="#b04aa0" fill-opacity=".2" stroke="#b04aa0" stroke-width="3.75"/>
<circle cx="1116.8" cy="441.0" r="17.40" fill="#a758c0" fill-opacity=".2" stroke="#a758c0" stroke-width="3.75"/>
<circle cx="1194.7" cy="432.4" r="17.20" fill="#cfa445" fill-opacity=".2" stroke="#cfa445" stroke-width="3.75"/>
<circle cx="1239.1" cy="453.4" r="17.30" fill="#b8850f" fill-opacity=".2" stroke="#b8850f" stroke-width="3.75"/>
<circle cx="1126.8" cy="552.8" r="16.00" fill="#7d101a" fill-opacity=".2" stroke="#7d101a" stroke-width="3.75"/>
<circle cx="891.0" cy="492.2" r="16.00" fill="#a655b8" fill-opacity=".2" stroke="#a655b8" stroke-width="3.75"/>
<circle cx="544.0" cy="481.9" r="16.10" fill="#334a9a" fill-opacity=".2" stroke="#334a9a" stroke-width="3.75"/>
<circle cx="619.5" cy="480.9" r="16.10" fill="#549c2e" fill-opacity=".2" stroke="#549c2e" stroke-width="3.75"/>
<circle cx="685.4" cy="496.2" r="16.10" fill="#a655b8" fill-opacity=".2" stroke="#a655b8" stroke-width="3.75"/>
<circle cx="766.2" cy="499.0" r="16.10" fill="#509a2c" fill-opacity=".2" stroke="#509a2c" stroke-width="3.75"/>
<circle cx="447.6" cy="497.7" r="16.10" fill="#6fbf82" fill-opacity=".2" stroke="#6fbf82" stroke-width="3.75"/>
<circle cx="486.3" cy="561.1" r="16.10" fill="#0a0a0a" fill-opacity=".2" stroke="#0a0a0a" stroke-width="3.75"/>
<circle cx="474.3" cy="529.8" r="16.10" fill="#dcc27c" fill-opacity=".2" stroke="#dcc27c" stroke-width="3.75"/>
<circle cx="469.0" cy="545.8" r="16.10" fill="#5a9a1e" fill-opacity=".2" stroke="#5a9a1e" stroke-width="3.75"/>
<circle cx="541.9" cy="518.9" r="16.10" fill="#a0254f" fill-opacity=".2" stroke="#a0254f" stroke-width="3.75"/>
<circle cx="560.0" cy="544.4" r="16.10" fill="#b5449b" fill-opacity=".2" stroke="#b5449b" stroke-width="3.75"/>
<circle cx="610.6" cy="538.5" r="16.10" fill="#62b878" fill-opacity=".2" stroke="#62b878" stroke-width="3.75"/>
<circle cx="639.9" cy="573.0" r="16.10" fill="#2f4794" fill-opacity=".2" stroke="#2f4794" stroke-width="3.75"/>
<circle cx="698.5" cy="560.3" r="16.10" fill="#a8479a" fill-opacity=".2" stroke="#a8479a" stroke-width="3.75"/>
<circle cx="769.9" cy="558.0" r="16.10" fill="#a04594" fill-opacity=".2" stroke="#a04594" stroke-width="3.75"/>
<circle cx="834.6" cy="545.6" r="16.10" fill="#1c2a5e" fill-opacity=".2" stroke="#1c2a5e" stroke-width="3.75"/>
<circle cx="889.6" cy="566.0" r="16.10" fill="#e6d9b8" fill-opacity=".2" stroke="#e6d9b8" stroke-width="3.75"/>
<circle cx="707.5" cy="636.4" r="16.10" fill="#62b878" fill-opacity=".2" stroke="#62b878" stroke-width="3.75"/>
<circle cx="765.7" cy="620.4" r="16.10" fill="#b048a0" fill-opacity=".2" stroke="#b048a0" stroke-width="3.75"/>
<circle cx="783.2" cy="598.1" r="16.10" fill="#c9a03c" fill-opacity=".2" stroke="#c9a03c" stroke-width="3.75"/>
<circle cx="765.3" cy="632.1" r="16.10" fill="#e3d3a6" fill-opacity=".2" stroke="#e3d3a6" stroke-width="3.75"/>
<circle cx="822.1" cy="603.3" r="16.10" fill="#dbbf80" fill-opacity=".2" stroke="#dbbf80" stroke-width="3.75"/>
<circle cx="800.4" cy="651.8" r="16.10" fill="#e6d9b8" fill-opacity=".2" stroke="#e6d9b8" stroke-width="3.75"/>
<circle cx="680.4" cy="694.0" r="16.10" fill="#6fcfb0" fill-opacity=".2" stroke="#6fcfb0" stroke-width="3.75"/>
<circle cx="748.2" cy="707.8" r="16.10" fill="#a0244f" fill-opacity=".2" stroke="#a0244f" stroke-width="3.75"/>
<circle cx="792.8" cy="701.9" r="16.10" fill="#cfa040" fill-opacity=".2" stroke="#cfa040" stroke-width="3.75"/>
<circle cx="800.2" cy="738.0" r="16.10" fill="#62bd7e" fill-opacity=".2" stroke="#62bd7e" stroke-width="3.75"/>
<circle cx="765.7" cy="746.3" r="17.10" fill="#62bd7e" fill-opacity=".2" stroke="#62bd7e" stroke-width="3.75"/>
<circle cx="675.8" cy="761.2" r="17.50" fill="#c48a12" fill-opacity=".2" stroke="#c48a12" stroke-width="3.75"/>
<circle cx="884.8" cy="747.7" r="17.10" fill="#7d101a" fill-opacity=".2" stroke="#7d101a" stroke-width="3.75"/>
<circle cx="753.5" cy="827.8" r="18.80" fill="#d8c080" fill-opacity=".2" stroke="#d8c080" stroke-width="3.75"/>
</svg>
<div id="zoom"><i style="left:11px;top:17.3px;width:15.5px;height:2.4px"></i><i style="left:17.6px;top:11px;width:2.4px;height:15px"></i><i style="left:0;top:36.5px;width:37px;height:1px;background:#ccc"></i><i style="left:11px;top:54.5px;width:15.5px;height:2.4px"></i></div>
<div id="pill">
<svg width="101" height="40" viewBox="0 0 101 40" fill="none" stroke="#fff" stroke-width="1.8" stroke-linecap="round" stroke-linejoin="round">
<path d="M21.5 13.3c-4.2 0-7.3 2.9-7.3 6.4 0 1.7.7 3.2 1.9 4.4l-.9 3.3 3.5-1.5c.9.3 1.8.4 2.8.4 4.2 0 7.3-2.9 7.3-6.5s-3.1-6.5-7.3-6.500z"/>
<rect x="43.5" y="16" width="14.5" height="9.2" rx="4.6"/><circle cx="48.3" cy="20.6" r="1.9"/>
<path d="M74 16h9M74 20.500h13M74 25h13"/>
<circle cx="86" cy="15.5" r="2.3" fill="#4a9eff" stroke="none"/>
</svg></div>
<div id="attr"><span class="flag"></span><span class="a">Leaflet</span> <span style="color:#555">|</span> <span class="a">© <b>Jawg</b>Maps</span> © <span class="a">OpenStreetMap</span> contributors</div>
</div>
<div id="side">
<svg style="position:absolute;left:14px;top:19px" width="27" height="32" viewBox="0 0 27 32" fill="none" stroke="#c4c4c4" stroke-width="1.6" stroke-linecap="round" stroke-linejoin="round">
<path d="M7.5 1.3 Q13.5 0 19.5 1.3 Q21.5 1.9 21.5 4 V11.5 C21.5 15.5 17.5 18.4 13.5 20.1 C9.5 18.4 5.5 15.5 5.5 11.5 V4 Q5.5 1.9 7.5 1.300Z" fill="#dedede" stroke="#e4e4e4" stroke-width=".8"/>
<circle cx="13.5" cy="9.8" r="5.2" fill="#ececec" stroke="#6f6f6f" stroke-width="1"/>
<path d="M13.5 5v9.600M10.2 7.400c1.3 0 1.9.8 1.9 1.700s-.7 1.6-1.9 1.600M10.6 12.700c.9 0 1.4-.5 1.5-1.200M16.8 7.200c-1.3 0-1.9.8-1.9 1.700s.7 1.8 2 1.800M16.4 12.700c-.9 0-1.4-.5-1.5-1.2" stroke="#6f6f6f" stroke-width=".9"/>
<path d="M1.3 15.800C1.6 20 3 23.5 6.2 26.500L8.2 30.500H12.200V25.800C12.2 23 10 20.8 7.3 19.500M4.3 18.400C5 20.6 6.5 22.5 8.7 23.8"/>
<path d="M25.7 15.800C25.4 20 24 23.5 20.8 26.500L18.8 30.500H14.800V25.800C14.8 23 17 20.8 19.7 19.500M22.7 18.400C22 20.6 20.5 22.5 18.3 23.8"/>
</svg>
<div id="logo">ReliefMap</div>
<div id="upl">Upload Invoice</div>
<div id="search"><span>Search</span>
<svg style="position:absolute;left:86px;top:15px" width="22" height="22" viewBox="0 0 22 22"><path d="M2 18.5 L8.5 12.5" stroke="#5d4a9c" stroke-width="3.4" stroke-linecap="round"/><circle cx="13.3" cy="8" r="6.5" fill="#4aa5f2" stroke="#5a4b99" stroke-width="1.5"/><circle cx="16" cy="5" r="1.2" fill="#eaf4ff"/></svg></div>
<div id="filt"><svg style="position:absolute;left:14px;top:14px" width="24" height="22" viewBox="0 0 24 22" stroke="#fff" stroke-width="2.1" stroke-linecap="round" fill="#fff"><path d="M1.5 3.500h2M10.5 3.500h11M1.5 11h9M17.5 11h4M1.5 18.500h2M10.5 18.500h11"/><circle cx="7" cy="3.5" r="2.7" stroke="none"/><circle cx="14.5" cy="11" r="2.7" stroke="none"/><circle cx="7" cy="18.5" r="2.7" stroke="none"/></svg></div>
<div class="card" style="top:168px"><b>South Sudan: Measles - Dec 2022</b><u>SS</u><s>Epidemic</s></div>
<div class="card" style="top:327px"><b>Kenya: Drought - 2014-2024</b><u>KE</u><s>Drought</s></div>
<div class="card" style="top:486px"><b>Somalia: Cholera Outbreak - Apr 2016</b><u>SO</u><s>Epidemic</s></div>
<div class="card" style="top:645px"><b>Tanzania: Floods - Apr 2024</b><u>TZ</u><s>Flood</s></div>
<div class="card" style="top:804px"><b>Nigeria: Lassa Fever Outbreak - Jan 2023</b><u>NG</u><s>Epidemic</s></div>
<div class="card" style="top:963px"><b>Burkina Faso: Measles Outbreak - Jan 2024</b><u>BF</u><s>Epidemic</s></div>
</div>
</body></html>
